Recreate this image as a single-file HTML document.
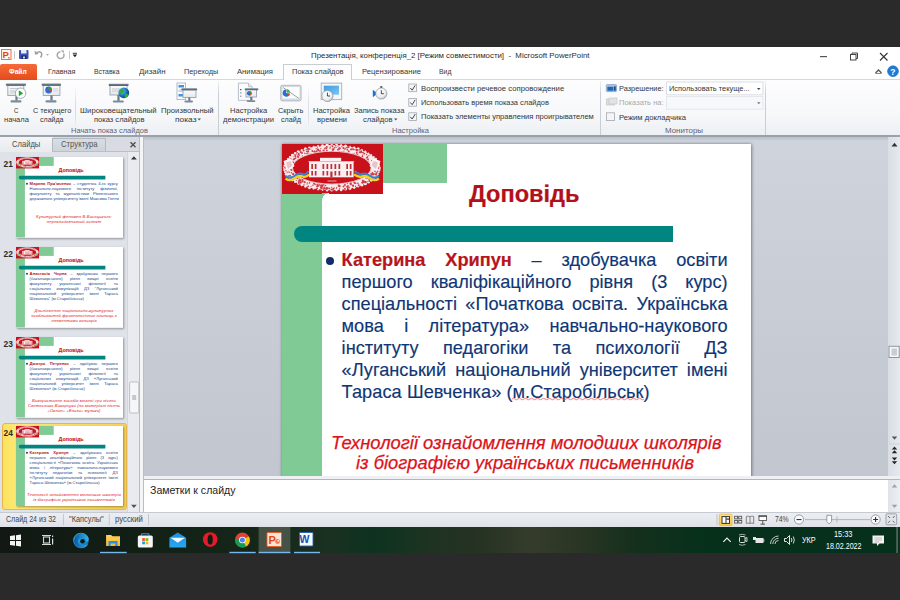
<!DOCTYPE html>
<html><head><meta charset="utf-8">
<style>
*{margin:0;padding:0;box-sizing:border-box}
html,body{width:900px;height:600px;overflow:hidden;background:#2a2a2a;font-family:"Liberation Sans",sans-serif}
.a{position:absolute}
.tx{position:absolute;white-space:nowrap;line-height:1;transform-origin:0 0}
svg{position:absolute;overflow:visible}
.jl{position:absolute;left:0;width:386px;white-space:nowrap;text-align:justify;text-align-last:justify;line-height:1}
.jl.last{text-align-last:left;text-align:left}
</style></head><body>
<!-- title + tabs -->
<div class="a" style="left:0;top:47px;width:900px;height:32px;background:#fff"></div>
<div class="a" style="left:0;top:79px;width:900px;height:1px;background:#d3d8de"></div>
<!-- active tab -->
<div class="a" style="left:283px;top:64px;width:69px;height:16px;background:#fdfdfe;border:1px solid #c9ced5;border-bottom:none"></div>
<!-- file button -->
<div class="a" style="left:0;top:64px;width:37px;height:15.5px;background:linear-gradient(#f66a3a,#e54b1c);border-radius:2px 2px 0 0"></div>
<!-- ribbon -->
<div class="a" style="left:0;top:80px;width:900px;height:56px;background:linear-gradient(#fdfdfe 0%,#f7f8fa 60%,#eceff3 100%)"></div>
<div class="a" style="left:0;top:135px;width:900px;height:2px;background:#9aa1aa"></div>
<!-- group separators -->
<div class="a" style="left:218px;top:81px;width:1px;height:54px;background:linear-gradient(#eef0f3,#c9ced5 25%,#c9ced5 100%)"></div>
<div class="a" style="left:600px;top:81px;width:1px;height:54px;background:linear-gradient(#eef0f3,#c9ced5 25%,#c9ced5 100%)"></div>
<div class="a" style="left:765px;top:81px;width:1px;height:54px;background:linear-gradient(#eef0f3,#c9ced5 25%,#c9ced5 100%)"></div>
<div class="a" style="left:75px;top:88px;width:1px;height:40px;background:linear-gradient(#f5f6f8,#d9dde2 40%,#d9dde2 70%,#f1f3f6)"></div>
<div class="a" style="left:308px;top:88px;width:1px;height:40px;background:linear-gradient(#f5f6f8,#dde1e6 40%,#dde1e6 70%,#f1f3f6)"></div>

<!-- main area -->
<div class="a" style="left:140px;top:137px;width:760px;height:339px;background:linear-gradient(#cfd4dc,#c2c7cf)"></div>
<!-- left panel -->
<div class="a" style="left:0;top:137px;width:140px;height:375px;background:#dfe3e9"></div>
<div class="a" style="left:52px;top:137px;width:88px;height:15px;background:#d8dce2"></div>
<div class="a" style="left:0;top:137px;width:52.5px;height:15px;background:linear-gradient(#f3f4f6,#e8ebef)"></div>
<div class="a" style="left:52px;top:137.5px;width:54px;height:14.5px;background:linear-gradient(#d9dde3,#cdd2d9);border:1px solid #b3b9c1;border-bottom:none"></div>
<div class="a" style="left:52px;top:151px;width:88px;height:1px;background:#b9bfc7"></div>
<div class="a" style="left:127px;top:152px;width:12px;height:360px;background:#e8ebef;border-left:1px solid #d3d7dd"></div>
<div class="a" style="left:139px;top:137px;width:1px;height:375px;background:#b6bcc4"></div>
<div class="a" style="left:140px;top:137px;width:3px;height:375px;background:#f3f5f7"></div>
<div class="a" style="left:143px;top:137px;width:1px;height:375px;background:#b9bec6"></div>
<div class="a" style="left:2px;top:422.5px;width:125px;height:87.5px;border:1px solid #e8b646;border-radius:3px;background:linear-gradient(90deg,#fde25e,#fde878 12%,#f9d254 100%)"></div>
<div class="a" style="left:16px;top:157.0px;width:107.2px;height:80.5px;box-shadow:1px 1px 2px rgba(0,0,0,.35);overflow:hidden">
<div class="a" style="left:0;top:0;width:469px;height:352px;transform:scale(0.2286);transform-origin:0 0">
<div class="a" style="left:0;top:0;width:469px;height:352px;background:#fff">
<div class="a" style="left:0;top:0;width:39px;height:352px;background:#80ca95"></div>
<div class="a" style="left:101px;top:0;width:64px;height:39px;background:#80ca95"></div>
<svg style="left:0;top:0" width="101" height="50" viewBox="0 0 101 50">
    <rect x="0" y="0" width="101" height="50" fill="#c8111b"/>
    <g fill="#f6eaec"><circle cx="97.3" cy="23.7" r="1.51"/><circle cx="97.1" cy="25.9" r="1.44"/><circle cx="96.4" cy="28.1" r="1.34"/><circle cx="95.3" cy="30.3" r="1.34"/><circle cx="93.7" cy="32.3" r="1.15"/><circle cx="91.7" cy="34.4" r="1.10"/><circle cx="89.3" cy="36.3" r="1.46"/><circle cx="86.5" cy="38.0" r="1.51"/><circle cx="83.4" cy="39.7" r="1.56"/><circle cx="79.9" cy="41.2" r="1.38"/><circle cx="76.2" cy="42.5" r="1.11"/><circle cx="72.2" cy="43.6" r="1.43"/><circle cx="68.0" cy="44.6" r="1.42"/><circle cx="63.6" cy="45.3" r="1.26"/><circle cx="59.1" cy="45.9" r="1.34"/><circle cx="54.5" cy="46.2" r="1.15"/><circle cx="49.8" cy="46.3" r="1.29"/><circle cx="45.1" cy="46.2" r="1.18"/><circle cx="40.5" cy="45.9" r="0.94"/><circle cx="36.0" cy="45.3" r="1.14"/><circle cx="31.6" cy="44.6" r="1.13"/><circle cx="27.4" cy="43.6" r="1.59"/><circle cx="23.4" cy="42.5" r="1.24"/><circle cx="19.7" cy="41.2" r="1.16"/><circle cx="16.2" cy="39.7" r="1.07"/><circle cx="13.1" cy="38.0" r="1.06"/><circle cx="10.3" cy="36.3" r="1.14"/><circle cx="7.9" cy="34.4" r="0.99"/><circle cx="5.9" cy="32.3" r="0.91"/><circle cx="4.3" cy="30.3" r="1.51"/><circle cx="3.2" cy="28.1" r="1.22"/><circle cx="2.5" cy="25.9" r="1.21"/><circle cx="2.3" cy="23.7" r="1.30"/><circle cx="2.5" cy="21.5" r="1.11"/><circle cx="3.2" cy="19.3" r="1.02"/><circle cx="4.3" cy="17.1" r="0.95"/><circle cx="5.9" cy="15.1" r="1.11"/><circle cx="7.9" cy="13.0" r="1.12"/><circle cx="10.3" cy="11.1" r="1.41"/><circle cx="13.1" cy="9.4" r="1.29"/><circle cx="16.2" cy="7.7" r="1.56"/><circle cx="19.7" cy="6.2" r="1.14"/><circle cx="23.4" cy="4.9" r="1.54"/><circle cx="27.4" cy="3.8" r="1.31"/><circle cx="31.6" cy="2.8" r="0.96"/><circle cx="36.0" cy="2.1" r="1.03"/><circle cx="40.5" cy="1.5" r="1.31"/><circle cx="45.1" cy="1.2" r="1.59"/><circle cx="49.8" cy="1.1" r="1.15"/><circle cx="54.5" cy="1.2" r="1.44"/><circle cx="59.1" cy="1.5" r="1.20"/><circle cx="63.6" cy="2.1" r="1.51"/><circle cx="68.0" cy="2.8" r="0.95"/><circle cx="72.2" cy="3.8" r="1.24"/><circle cx="76.2" cy="4.9" r="1.53"/><circle cx="79.9" cy="6.2" r="1.09"/><circle cx="83.4" cy="7.7" r="1.08"/><circle cx="86.5" cy="9.4" r="0.92"/><circle cx="89.3" cy="11.1" r="1.02"/><circle cx="91.7" cy="13.0" r="1.09"/><circle cx="93.7" cy="15.1" r="1.39"/><circle cx="95.3" cy="17.1" r="1.05"/><circle cx="96.4" cy="19.3" r="1.18"/><circle cx="97.1" cy="21.5" r="1.04"/></g>
    <path fill-rule="evenodd" fill="#f6eaec" d="M2.3 23.7 A47.5 22.6 0 1 0 97.3 23.7 A47.5 22.6 0 1 0 2.3 23.7 Z M10.3 23.7 A39.5 16.6 0 1 0 89.3 23.7 A39.5 16.6 0 1 0 10.3 23.7 Z"/>
    <g fill="#cf3d48"><circle cx="32.4" cy="7.5" r="0.89"/><circle cx="8.0" cy="25.4" r="0.72"/><circle cx="6.6" cy="24.1" r="0.52"/><circle cx="43.1" cy="3.7" r="0.55"/><circle cx="13.0" cy="10.9" r="0.88"/><circle cx="92.9" cy="27.3" r="0.74"/><circle cx="84.3" cy="14.0" r="0.59"/><circle cx="12.4" cy="14.8" r="0.99"/><circle cx="54.1" cy="3.4" r="0.54"/><circle cx="85.9" cy="34.4" r="0.67"/><circle cx="85.9" cy="15.1" r="0.92"/><circle cx="92.6" cy="22.5" r="0.90"/><circle cx="3.2" cy="22.0" r="0.60"/><circle cx="75.5" cy="6.5" r="0.65"/><circle cx="38.9" cy="41.0" r="0.55"/><circle cx="84.8" cy="13.4" r="0.75"/><circle cx="35.8" cy="41.6" r="1.07"/><circle cx="15.6" cy="8.7" r="0.64"/><circle cx="66.6" cy="3.0" r="1.04"/><circle cx="76.7" cy="41.2" r="0.98"/><circle cx="11.0" cy="30.0" r="0.54"/><circle cx="15.4" cy="12.2" r="0.71"/><circle cx="36.3" cy="6.2" r="1.01"/><circle cx="47.9" cy="4.5" r="0.56"/><circle cx="81.4" cy="8.0" r="0.51"/><circle cx="93.2" cy="25.1" r="0.59"/><circle cx="53.7" cy="1.8" r="0.82"/><circle cx="22.6" cy="38.2" r="1.09"/><circle cx="83.7" cy="38.0" r="0.99"/><circle cx="44.4" cy="44.1" r="1.09"/><circle cx="93.6" cy="17.5" r="0.63"/><circle cx="23.0" cy="9.6" r="0.62"/><circle cx="61.5" cy="42.4" r="1.00"/><circle cx="65.1" cy="42.8" r="0.97"/><circle cx="18.3" cy="37.2" r="0.70"/><circle cx="79.2" cy="7.3" r="1.00"/><circle cx="52.1" cy="43.9" r="0.76"/><circle cx="41.6" cy="6.6" r="1.05"/><circle cx="57.6" cy="42.5" r="0.75"/><circle cx="78.5" cy="8.5" r="0.78"/><circle cx="47.4" cy="44.3" r="0.92"/><circle cx="43.9" cy="3.9" r="0.64"/><circle cx="8.1" cy="31.6" r="0.97"/><circle cx="93.4" cy="19.0" r="0.79"/><circle cx="11.2" cy="12.8" r="0.52"/><circle cx="26.1" cy="7.4" r="1.05"/><circle cx="54.6" cy="43.6" r="0.66"/><circle cx="24.1" cy="5.6" r="0.60"/><circle cx="25.8" cy="8.1" r="0.55"/><circle cx="26.6" cy="4.7" r="0.74"/><circle cx="70.5" cy="41.4" r="0.73"/><circle cx="15.5" cy="34.2" r="0.89"/><circle cx="72.2" cy="38.3" r="0.58"/><circle cx="82.0" cy="37.9" r="1.00"/><circle cx="57.7" cy="42.0" r="0.91"/><circle cx="36.0" cy="5.4" r="1.00"/><circle cx="65.0" cy="3.6" r="0.94"/><circle cx="95.6" cy="23.5" r="0.73"/><circle cx="63.3" cy="4.1" r="0.59"/><circle cx="94.9" cy="21.4" r="0.66"/><circle cx="87.0" cy="33.2" r="0.64"/><circle cx="30.3" cy="7.0" r="0.71"/><circle cx="31.7" cy="39.6" r="0.50"/><circle cx="73.8" cy="39.5" r="0.57"/><circle cx="90.9" cy="33.7" r="1.04"/><circle cx="16.7" cy="10.2" r="1.04"/><circle cx="34.2" cy="4.7" r="0.64"/><circle cx="87.1" cy="35.4" r="0.75"/><circle cx="84.7" cy="10.5" r="0.66"/><circle cx="44.2" cy="44.9" r="1.01"/><circle cx="39.0" cy="43.6" r="1.00"/><circle cx="25.1" cy="5.6" r="0.59"/><circle cx="13.4" cy="12.2" r="0.88"/><circle cx="68.8" cy="5.7" r="0.54"/><circle cx="94.0" cy="30.5" r="1.03"/><circle cx="3.1" cy="23.7" r="0.90"/><circle cx="65.7" cy="43.5" r="0.64"/><circle cx="20.2" cy="37.6" r="0.94"/><circle cx="80.5" cy="11.2" r="0.63"/><circle cx="93.3" cy="23.6" r="0.61"/><circle cx="65.5" cy="44.6" r="0.59"/><circle cx="39.2" cy="42.3" r="1.03"/><circle cx="91.4" cy="15.8" r="0.61"/><circle cx="80.7" cy="38.7" r="0.76"/><circle cx="5.8" cy="22.5" r="0.72"/><circle cx="36.3" cy="42.2" r="0.52"/><circle cx="73.5" cy="42.3" r="0.70"/><circle cx="62.5" cy="44.4" r="0.51"/><circle cx="80.8" cy="36.4" r="0.86"/><circle cx="20.3" cy="12.0" r="0.65"/><circle cx="95.4" cy="27.6" r="1.06"/><circle cx="37.1" cy="40.8" r="0.77"/><circle cx="14.7" cy="10.0" r="0.65"/><circle cx="20.7" cy="37.5" r="0.83"/><circle cx="63.0" cy="4.7" r="0.60"/><circle cx="41.4" cy="40.7" r="1.10"/><circle cx="40.4" cy="41.6" r="0.78"/><circle cx="95.6" cy="22.9" r="0.53"/><circle cx="90.8" cy="18.5" r="1.04"/><circle cx="16.5" cy="37.0" r="0.63"/><circle cx="81.4" cy="9.0" r="0.63"/><circle cx="38.2" cy="6.2" r="0.65"/><circle cx="71.3" cy="42.2" r="0.52"/><circle cx="42.8" cy="4.8" r="0.77"/><circle cx="50.5" cy="2.4" r="0.88"/><circle cx="6.3" cy="23.9" r="0.73"/><circle cx="72.0" cy="38.4" r="0.62"/><circle cx="96.2" cy="23.4" r="1.07"/><circle cx="7.4" cy="16.8" r="0.95"/><circle cx="27.7" cy="38.4" r="0.59"/><circle cx="49.7" cy="43.3" r="0.62"/><circle cx="18.7" cy="8.0" r="1.06"/><circle cx="66.9" cy="42.1" r="0.60"/><circle cx="77.1" cy="5.9" r="0.82"/><circle cx="57.3" cy="41.5" r="0.56"/><circle cx="18.1" cy="35.1" r="0.53"/><circle cx="80.5" cy="12.3" r="0.88"/><circle cx="35.4" cy="5.4" r="0.71"/><circle cx="24.6" cy="7.4" r="0.56"/><circle cx="62.9" cy="41.0" r="0.97"/><circle cx="25.1" cy="42.5" r="0.53"/><circle cx="54.4" cy="44.3" r="0.59"/><circle cx="79.9" cy="8.6" r="0.69"/><circle cx="87.3" cy="36.9" r="0.93"/><circle cx="68.4" cy="39.8" r="0.93"/><circle cx="22.0" cy="41.4" r="0.51"/><circle cx="86.4" cy="15.8" r="0.64"/><circle cx="89.0" cy="29.8" r="0.92"/><circle cx="68.7" cy="40.4" r="0.76"/><circle cx="61.4" cy="4.1" r="1.05"/><circle cx="34.5" cy="7.1" r="0.52"/><circle cx="80.3" cy="38.6" r="1.03"/><circle cx="83.2" cy="38.3" r="0.88"/><circle cx="28.9" cy="5.1" r="0.56"/><circle cx="74.5" cy="10.0" r="0.69"/><circle cx="22.0" cy="40.6" r="0.55"/><circle cx="80.5" cy="8.4" r="0.50"/><circle cx="20.6" cy="35.9" r="1.09"/><circle cx="11.7" cy="30.1" r="0.55"/><circle cx="39.3" cy="41.9" r="0.55"/><circle cx="37.8" cy="41.6" r="0.64"/><circle cx="32.7" cy="7.7" r="1.01"/><circle cx="86.9" cy="11.6" r="0.61"/><circle cx="16.1" cy="12.0" r="0.70"/><circle cx="10.9" cy="18.4" r="1.09"/><circle cx="62.9" cy="5.5" r="0.62"/><circle cx="71.1" cy="41.4" r="0.96"/><circle cx="68.9" cy="40.1" r="0.91"/><circle cx="66.5" cy="43.8" r="0.61"/><circle cx="51.4" cy="5.2" r="0.84"/><circle cx="40.8" cy="44.6" r="0.63"/><circle cx="75.0" cy="6.2" r="1.09"/><circle cx="35.5" cy="3.1" r="0.66"/><circle cx="21.6" cy="6.5" r="0.97"/><circle cx="80.4" cy="38.5" r="0.78"/><circle cx="35.4" cy="40.1" r="0.66"/><circle cx="34.6" cy="7.6" r="1.04"/><circle cx="77.8" cy="8.3" r="1.03"/><circle cx="65.8" cy="42.1" r="0.97"/><circle cx="82.4" cy="9.7" r="0.92"/><circle cx="43.5" cy="41.5" r="0.83"/><circle cx="6.7" cy="22.2" r="0.59"/><circle cx="65.5" cy="39.6" r="0.72"/><circle cx="41.6" cy="45.2" r="0.55"/><circle cx="67.2" cy="43.8" r="0.70"/><circle cx="96.2" cy="24.2" r="0.79"/><circle cx="33.8" cy="40.6" r="0.72"/><circle cx="75.7" cy="10.3" r="0.76"/><circle cx="50.1" cy="45.8" r="0.89"/><circle cx="71.1" cy="41.7" r="0.83"/><circle cx="90.4" cy="28.8" r="0.89"/><circle cx="89.7" cy="31.0" r="0.72"/><circle cx="80.8" cy="37.1" r="0.84"/><circle cx="56.0" cy="2.3" r="0.57"/><circle cx="90.1" cy="21.3" r="0.51"/><circle cx="10.9" cy="30.5" r="0.63"/><circle cx="72.2" cy="9.2" r="0.53"/><circle cx="84.0" cy="34.4" r="0.55"/><circle cx="45.7" cy="43.9" r="0.65"/><circle cx="8.7" cy="15.0" r="0.94"/><circle cx="48.2" cy="3.3" r="0.72"/><circle cx="66.7" cy="7.2" r="0.98"/><circle cx="69.2" cy="39.0" r="0.70"/><circle cx="81.8" cy="38.2" r="1.02"/><circle cx="83.6" cy="38.0" r="0.91"/><circle cx="89.6" cy="16.6" r="0.55"/><circle cx="57.2" cy="42.2" r="1.03"/><circle cx="19.7" cy="8.9" r="0.92"/><circle cx="11.3" cy="29.9" r="0.97"/><circle cx="42.3" cy="44.5" r="0.96"/><circle cx="20.5" cy="8.9" r="0.55"/><circle cx="5.9" cy="26.4" r="1.02"/><circle cx="45.5" cy="44.5" r="1.05"/><circle cx="7.2" cy="28.3" r="0.74"/><circle cx="63.1" cy="45.0" r="0.90"/><circle cx="35.1" cy="42.5" r="1.04"/><circle cx="11.2" cy="15.6" r="0.65"/><circle cx="17.4" cy="11.6" r="0.59"/><circle cx="61.9" cy="7.1" r="0.63"/><circle cx="85.5" cy="12.9" r="0.75"/><circle cx="16.1" cy="13.1" r="1.00"/><circle cx="87.8" cy="31.6" r="0.63"/><circle cx="26.0" cy="9.9" r="0.72"/><circle cx="29.1" cy="42.2" r="0.53"/><circle cx="18.5" cy="36.3" r="0.93"/><circle cx="9.5" cy="28.8" r="0.80"/><circle cx="85.6" cy="12.9" r="0.61"/><circle cx="51.0" cy="6.1" r="0.93"/><circle cx="93.5" cy="23.5" r="0.81"/><circle cx="22.7" cy="9.0" r="0.56"/><circle cx="25.3" cy="38.5" r="0.52"/><circle cx="10.4" cy="33.0" r="0.62"/><circle cx="69.2" cy="5.3" r="1.02"/><circle cx="16.9" cy="38.9" r="1.06"/><circle cx="39.4" cy="44.3" r="0.97"/><circle cx="51.2" cy="45.0" r="1.06"/><circle cx="52.5" cy="3.7" r="0.76"/><circle cx="50.0" cy="1.5" r="0.58"/><circle cx="91.9" cy="29.9" r="0.99"/><circle cx="90.7" cy="29.4" r="0.65"/><circle cx="93.7" cy="24.4" r="0.66"/><circle cx="13.7" cy="14.2" r="0.74"/><circle cx="9.5" cy="25.9" r="1.00"/><circle cx="35.2" cy="40.6" r="0.64"/><circle cx="7.0" cy="18.5" r="0.76"/><circle cx="72.3" cy="5.6" r="0.64"/><circle cx="49.3" cy="45.3" r="0.84"/><circle cx="30.5" cy="7.2" r="0.85"/><circle cx="57.4" cy="4.6" r="1.05"/><circle cx="32.4" cy="39.7" r="1.00"/><circle cx="42.4" cy="42.8" r="0.51"/><circle cx="5.6" cy="26.8" r="0.80"/><circle cx="35.1" cy="44.6" r="0.91"/><circle cx="51.9" cy="5.1" r="0.72"/><circle cx="56.7" cy="41.4" r="1.08"/><circle cx="80.1" cy="8.4" r="0.69"/><circle cx="50.7" cy="5.6" r="1.04"/><circle cx="5.1" cy="19.6" r="0.97"/><circle cx="74.7" cy="5.5" r="0.56"/><circle cx="26.9" cy="5.1" r="1.04"/><circle cx="57.5" cy="45.1" r="0.76"/><circle cx="94.1" cy="23.5" r="1.07"/><circle cx="31.0" cy="41.2" r="0.79"/><circle cx="24.8" cy="9.4" r="0.67"/><circle cx="16.1" cy="33.3" r="0.56"/><circle cx="27.2" cy="39.3" r="0.58"/><circle cx="79.1" cy="7.9" r="0.71"/><circle cx="93.2" cy="24.0" r="0.64"/><circle cx="44.9" cy="6.6" r="0.92"/><circle cx="26.3" cy="42.3" r="0.85"/><circle cx="38.8" cy="4.5" r="0.61"/><circle cx="65.3" cy="5.6" r="0.84"/><circle cx="13.2" cy="33.8" r="0.67"/><circle cx="40.1" cy="42.8" r="0.96"/><circle cx="13.8" cy="13.4" r="0.52"/><circle cx="25.1" cy="39.9" r="0.71"/><circle cx="16.7" cy="9.7" r="0.68"/><circle cx="37.9" cy="2.3" r="0.69"/><circle cx="81.9" cy="36.6" r="0.67"/><circle cx="59.9" cy="2.7" r="0.65"/><circle cx="73.5" cy="39.0" r="0.67"/><circle cx="42.1" cy="43.8" r="0.91"/><circle cx="72.6" cy="39.1" r="0.88"/><circle cx="44.9" cy="3.0" r="0.92"/><circle cx="6.8" cy="17.1" r="0.75"/><circle cx="14.2" cy="33.4" r="0.90"/><circle cx="91.8" cy="16.8" r="0.68"/><circle cx="74.8" cy="8.4" r="0.90"/><circle cx="75.3" cy="39.1" r="0.57"/><circle cx="12.0" cy="15.6" r="0.78"/><circle cx="9.1" cy="33.8" r="1.09"/><circle cx="55.7" cy="5.6" r="0.79"/><circle cx="90.2" cy="30.5" r="0.88"/><circle cx="91.7" cy="30.8" r="0.65"/><circle cx="24.9" cy="6.9" r="0.52"/><circle cx="76.1" cy="39.5" r="0.68"/><circle cx="17.3" cy="37.0" r="1.00"/><circle cx="18.9" cy="38.9" r="0.69"/><circle cx="57.4" cy="4.2" r="0.91"/><circle cx="4.9" cy="20.9" r="0.61"/><circle cx="94.3" cy="29.3" r="0.99"/><circle cx="6.8" cy="32.0" r="0.87"/><circle cx="93.4" cy="22.9" r="0.89"/><circle cx="44.4" cy="4.5" r="0.90"/><circle cx="25.6" cy="4.9" r="0.82"/><circle cx="56.6" cy="5.8" r="0.81"/><circle cx="58.1" cy="4.2" r="0.74"/><circle cx="8.1" cy="20.9" r="1.02"/><circle cx="74.4" cy="5.8" r="1.09"/><circle cx="71.0" cy="5.2" r="1.00"/><circle cx="94.1" cy="26.7" r="0.96"/><circle cx="14.3" cy="36.6" r="0.53"/><circle cx="17.3" cy="35.2" r="0.70"/><circle cx="5.2" cy="28.6" r="0.56"/><circle cx="37.9" cy="7.2" r="1.03"/><circle cx="85.7" cy="37.7" r="0.52"/><circle cx="18.7" cy="38.6" r="0.91"/><circle cx="39.2" cy="41.1" r="0.87"/><circle cx="8.4" cy="15.8" r="0.63"/><circle cx="4.3" cy="26.6" r="0.96"/></g>
    <ellipse cx="49.8" cy="23.7" rx="39.3" ry="16.4" fill="none" stroke="#f6eaec" stroke-width="0.8"/>
    <path d="M1.5 17 L9 14.5 L12.5 22 L5 28 Z M98.5 17 L91 14.5 L87.5 22 L95 28 Z" fill="#fbf3f4"/>
    <path d="M4 18.5 L8.5 17 L10.5 21.5 L6 25 Z M96 18.5 L91.5 17 L89.5 21.5 L94 25 Z" fill="#e9c4c8"/>
    <rect x="27" y="17.3" width="44.6" height="16" fill="#fbeff1"/>
    <rect x="38" y="13.8" width="21.2" height="4" fill="#fbeff1"/>
    <rect x="26.5" y="17" width="45.6" height="1" fill="#eab4b9"/>
    <g fill="#b8323d">
      <rect x="29.3" y="20" width="1.7" height="5"/><rect x="32.8" y="20" width="1.7" height="5"/>
      <rect x="40.5" y="20" width="1.7" height="5"/><rect x="44.5" y="20" width="1.7" height="5"/><rect x="48.5" y="20" width="1.7" height="5"/><rect x="52.5" y="20" width="1.7" height="5"/><rect x="56.5" y="20" width="1.7" height="5"/>
      <rect x="64.3" y="20" width="1.7" height="5"/><rect x="67.8" y="20" width="1.7" height="5"/>
      <rect x="29.3" y="27" width="1.7" height="4.5"/><rect x="32.8" y="27" width="1.7" height="4.5"/>
      <rect x="40.5" y="27" width="1.7" height="4.5"/><rect x="44.5" y="27" width="1.7" height="4.5"/><rect x="48.3" y="27.5" width="2.2" height="5.8"/><rect x="52.5" y="27" width="1.7" height="4.5"/><rect x="56.5" y="27" width="1.7" height="4.5"/>
      <rect x="64.3" y="27" width="1.7" height="4.5"/><rect x="67.8" y="27" width="1.7" height="4.5"/>
    </g>
    <path d="M3.5 34.5 Q8 38 13 34 Q17 31 21 32.5 Q24 33.5 27 30.5" fill="none" stroke="#f2d21a" stroke-width="2.4"/>
    <path d="M3.5 32 Q8 35.5 13 31.5 Q17 28.5 21 30 Q24 31 26.5 27" fill="none" stroke="#2f86d6" stroke-width="2"/>
    <path d="M97 34.5 Q92.5 38 87.5 34 Q83.5 31 79.5 32.5 Q76.5 33.5 72 30.5" fill="none" stroke="#f2d21a" stroke-width="2.4"/>
    <path d="M97 32 Q92.5 35.5 87.5 31.5 Q83.5 28.5 79.5 30 Q76.5 31 72.5 27" fill="none" stroke="#2f86d6" stroke-width="2"/>
    <rect x="45.5" y="36.5" width="9" height="1" fill="#e8a5aa"/>
  </svg>
<div class="a" style="left:12px;top:82px;width:379px;height:16px;background:#008580;border-radius:8px 0 0 8px"></div>
<div class="a" style="left:44px;top:113px;width:8px;height:8px;border-radius:50%;background:#0f2e66"></div>
<div class="tx" style="left:186px;top:45px;font-size:23.4px;font-weight:bold;color:#c8121b;-webkit-text-stroke:0.3px #c8121b">Доповідь</div>
<div class="jl" style="left:59.6px;top:106.1px;font-size:18.2px;color:#0f3675;color:#1d4a8a"><b style="color:#b5151b">Марина Пря'мченко</b> – студентка 4-го курсу</div>
<div class="jl" style="left:59.6px;top:128.0px;font-size:18.2px;color:#0f3675;color:#1d4a8a">Навчально-наукового інституту фізичної,</div>
<div class="jl" style="left:59.6px;top:149.9px;font-size:18.2px;color:#0f3675;color:#1d4a8a">факультету та журналістики Рівненського</div>
<div class="jl last" style="left:59.6px;top:171.8px;font-size:18.2px;color:#0f3675;color:#1d4a8a">державного університету імені Максима Гонти</div>
<div class="tx" style="left:39px;width:430px;text-align:center;top:253.0px;font-size:18.2px;font-style:italic;color:#e0141c;letter-spacing:0.6px">Культурний феномен В.Висоцького:</div>
<div class="tx" style="left:39px;width:430px;text-align:center;top:275.0px;font-size:18.2px;font-style:italic;color:#e0141c;letter-spacing:0.6px">перекладознавчий аспект</div>
</div>
</div></div>
<div class="tx" style="left:3.6px;top:159.7px;font-size:8.4px;font-weight:bold;color:#2b2b2b">21</div>
<div class="a" style="left:16px;top:247.2px;width:107.2px;height:80.5px;box-shadow:1px 1px 2px rgba(0,0,0,.35);overflow:hidden">
<div class="a" style="left:0;top:0;width:469px;height:352px;transform:scale(0.2286);transform-origin:0 0">
<div class="a" style="left:0;top:0;width:469px;height:352px;background:#fff">
<div class="a" style="left:0;top:0;width:39px;height:352px;background:#80ca95"></div>
<div class="a" style="left:101px;top:0;width:64px;height:39px;background:#80ca95"></div>
<svg style="left:0;top:0" width="101" height="50" viewBox="0 0 101 50">
    <rect x="0" y="0" width="101" height="50" fill="#c8111b"/>
    <g fill="#f6eaec"><circle cx="97.3" cy="23.7" r="1.51"/><circle cx="97.1" cy="25.9" r="1.44"/><circle cx="96.4" cy="28.1" r="1.34"/><circle cx="95.3" cy="30.3" r="1.34"/><circle cx="93.7" cy="32.3" r="1.15"/><circle cx="91.7" cy="34.4" r="1.10"/><circle cx="89.3" cy="36.3" r="1.46"/><circle cx="86.5" cy="38.0" r="1.51"/><circle cx="83.4" cy="39.7" r="1.56"/><circle cx="79.9" cy="41.2" r="1.38"/><circle cx="76.2" cy="42.5" r="1.11"/><circle cx="72.2" cy="43.6" r="1.43"/><circle cx="68.0" cy="44.6" r="1.42"/><circle cx="63.6" cy="45.3" r="1.26"/><circle cx="59.1" cy="45.9" r="1.34"/><circle cx="54.5" cy="46.2" r="1.15"/><circle cx="49.8" cy="46.3" r="1.29"/><circle cx="45.1" cy="46.2" r="1.18"/><circle cx="40.5" cy="45.9" r="0.94"/><circle cx="36.0" cy="45.3" r="1.14"/><circle cx="31.6" cy="44.6" r="1.13"/><circle cx="27.4" cy="43.6" r="1.59"/><circle cx="23.4" cy="42.5" r="1.24"/><circle cx="19.7" cy="41.2" r="1.16"/><circle cx="16.2" cy="39.7" r="1.07"/><circle cx="13.1" cy="38.0" r="1.06"/><circle cx="10.3" cy="36.3" r="1.14"/><circle cx="7.9" cy="34.4" r="0.99"/><circle cx="5.9" cy="32.3" r="0.91"/><circle cx="4.3" cy="30.3" r="1.51"/><circle cx="3.2" cy="28.1" r="1.22"/><circle cx="2.5" cy="25.9" r="1.21"/><circle cx="2.3" cy="23.7" r="1.30"/><circle cx="2.5" cy="21.5" r="1.11"/><circle cx="3.2" cy="19.3" r="1.02"/><circle cx="4.3" cy="17.1" r="0.95"/><circle cx="5.9" cy="15.1" r="1.11"/><circle cx="7.9" cy="13.0" r="1.12"/><circle cx="10.3" cy="11.1" r="1.41"/><circle cx="13.1" cy="9.4" r="1.29"/><circle cx="16.2" cy="7.7" r="1.56"/><circle cx="19.7" cy="6.2" r="1.14"/><circle cx="23.4" cy="4.9" r="1.54"/><circle cx="27.4" cy="3.8" r="1.31"/><circle cx="31.6" cy="2.8" r="0.96"/><circle cx="36.0" cy="2.1" r="1.03"/><circle cx="40.5" cy="1.5" r="1.31"/><circle cx="45.1" cy="1.2" r="1.59"/><circle cx="49.8" cy="1.1" r="1.15"/><circle cx="54.5" cy="1.2" r="1.44"/><circle cx="59.1" cy="1.5" r="1.20"/><circle cx="63.6" cy="2.1" r="1.51"/><circle cx="68.0" cy="2.8" r="0.95"/><circle cx="72.2" cy="3.8" r="1.24"/><circle cx="76.2" cy="4.9" r="1.53"/><circle cx="79.9" cy="6.2" r="1.09"/><circle cx="83.4" cy="7.7" r="1.08"/><circle cx="86.5" cy="9.4" r="0.92"/><circle cx="89.3" cy="11.1" r="1.02"/><circle cx="91.7" cy="13.0" r="1.09"/><circle cx="93.7" cy="15.1" r="1.39"/><circle cx="95.3" cy="17.1" r="1.05"/><circle cx="96.4" cy="19.3" r="1.18"/><circle cx="97.1" cy="21.5" r="1.04"/></g>
    <path fill-rule="evenodd" fill="#f6eaec" d="M2.3 23.7 A47.5 22.6 0 1 0 97.3 23.7 A47.5 22.6 0 1 0 2.3 23.7 Z M10.3 23.7 A39.5 16.6 0 1 0 89.3 23.7 A39.5 16.6 0 1 0 10.3 23.7 Z"/>
    <g fill="#cf3d48"><circle cx="32.4" cy="7.5" r="0.89"/><circle cx="8.0" cy="25.4" r="0.72"/><circle cx="6.6" cy="24.1" r="0.52"/><circle cx="43.1" cy="3.7" r="0.55"/><circle cx="13.0" cy="10.9" r="0.88"/><circle cx="92.9" cy="27.3" r="0.74"/><circle cx="84.3" cy="14.0" r="0.59"/><circle cx="12.4" cy="14.8" r="0.99"/><circle cx="54.1" cy="3.4" r="0.54"/><circle cx="85.9" cy="34.4" r="0.67"/><circle cx="85.9" cy="15.1" r="0.92"/><circle cx="92.6" cy="22.5" r="0.90"/><circle cx="3.2" cy="22.0" r="0.60"/><circle cx="75.5" cy="6.5" r="0.65"/><circle cx="38.9" cy="41.0" r="0.55"/><circle cx="84.8" cy="13.4" r="0.75"/><circle cx="35.8" cy="41.6" r="1.07"/><circle cx="15.6" cy="8.7" r="0.64"/><circle cx="66.6" cy="3.0" r="1.04"/><circle cx="76.7" cy="41.2" r="0.98"/><circle cx="11.0" cy="30.0" r="0.54"/><circle cx="15.4" cy="12.2" r="0.71"/><circle cx="36.3" cy="6.2" r="1.01"/><circle cx="47.9" cy="4.5" r="0.56"/><circle cx="81.4" cy="8.0" r="0.51"/><circle cx="93.2" cy="25.1" r="0.59"/><circle cx="53.7" cy="1.8" r="0.82"/><circle cx="22.6" cy="38.2" r="1.09"/><circle cx="83.7" cy="38.0" r="0.99"/><circle cx="44.4" cy="44.1" r="1.09"/><circle cx="93.6" cy="17.5" r="0.63"/><circle cx="23.0" cy="9.6" r="0.62"/><circle cx="61.5" cy="42.4" r="1.00"/><circle cx="65.1" cy="42.8" r="0.97"/><circle cx="18.3" cy="37.2" r="0.70"/><circle cx="79.2" cy="7.3" r="1.00"/><circle cx="52.1" cy="43.9" r="0.76"/><circle cx="41.6" cy="6.6" r="1.05"/><circle cx="57.6" cy="42.5" r="0.75"/><circle cx="78.5" cy="8.5" r="0.78"/><circle cx="47.4" cy="44.3" r="0.92"/><circle cx="43.9" cy="3.9" r="0.64"/><circle cx="8.1" cy="31.6" r="0.97"/><circle cx="93.4" cy="19.0" r="0.79"/><circle cx="11.2" cy="12.8" r="0.52"/><circle cx="26.1" cy="7.4" r="1.05"/><circle cx="54.6" cy="43.6" r="0.66"/><circle cx="24.1" cy="5.6" r="0.60"/><circle cx="25.8" cy="8.1" r="0.55"/><circle cx="26.6" cy="4.7" r="0.74"/><circle cx="70.5" cy="41.4" r="0.73"/><circle cx="15.5" cy="34.2" r="0.89"/><circle cx="72.2" cy="38.3" r="0.58"/><circle cx="82.0" cy="37.9" r="1.00"/><circle cx="57.7" cy="42.0" r="0.91"/><circle cx="36.0" cy="5.4" r="1.00"/><circle cx="65.0" cy="3.6" r="0.94"/><circle cx="95.6" cy="23.5" r="0.73"/><circle cx="63.3" cy="4.1" r="0.59"/><circle cx="94.9" cy="21.4" r="0.66"/><circle cx="87.0" cy="33.2" r="0.64"/><circle cx="30.3" cy="7.0" r="0.71"/><circle cx="31.7" cy="39.6" r="0.50"/><circle cx="73.8" cy="39.5" r="0.57"/><circle cx="90.9" cy="33.7" r="1.04"/><circle cx="16.7" cy="10.2" r="1.04"/><circle cx="34.2" cy="4.7" r="0.64"/><circle cx="87.1" cy="35.4" r="0.75"/><circle cx="84.7" cy="10.5" r="0.66"/><circle cx="44.2" cy="44.9" r="1.01"/><circle cx="39.0" cy="43.6" r="1.00"/><circle cx="25.1" cy="5.6" r="0.59"/><circle cx="13.4" cy="12.2" r="0.88"/><circle cx="68.8" cy="5.7" r="0.54"/><circle cx="94.0" cy="30.5" r="1.03"/><circle cx="3.1" cy="23.7" r="0.90"/><circle cx="65.7" cy="43.5" r="0.64"/><circle cx="20.2" cy="37.6" r="0.94"/><circle cx="80.5" cy="11.2" r="0.63"/><circle cx="93.3" cy="23.6" r="0.61"/><circle cx="65.5" cy="44.6" r="0.59"/><circle cx="39.2" cy="42.3" r="1.03"/><circle cx="91.4" cy="15.8" r="0.61"/><circle cx="80.7" cy="38.7" r="0.76"/><circle cx="5.8" cy="22.5" r="0.72"/><circle cx="36.3" cy="42.2" r="0.52"/><circle cx="73.5" cy="42.3" r="0.70"/><circle cx="62.5" cy="44.4" r="0.51"/><circle cx="80.8" cy="36.4" r="0.86"/><circle cx="20.3" cy="12.0" r="0.65"/><circle cx="95.4" cy="27.6" r="1.06"/><circle cx="37.1" cy="40.8" r="0.77"/><circle cx="14.7" cy="10.0" r="0.65"/><circle cx="20.7" cy="37.5" r="0.83"/><circle cx="63.0" cy="4.7" r="0.60"/><circle cx="41.4" cy="40.7" r="1.10"/><circle cx="40.4" cy="41.6" r="0.78"/><circle cx="95.6" cy="22.9" r="0.53"/><circle cx="90.8" cy="18.5" r="1.04"/><circle cx="16.5" cy="37.0" r="0.63"/><circle cx="81.4" cy="9.0" r="0.63"/><circle cx="38.2" cy="6.2" r="0.65"/><circle cx="71.3" cy="42.2" r="0.52"/><circle cx="42.8" cy="4.8" r="0.77"/><circle cx="50.5" cy="2.4" r="0.88"/><circle cx="6.3" cy="23.9" r="0.73"/><circle cx="72.0" cy="38.4" r="0.62"/><circle cx="96.2" cy="23.4" r="1.07"/><circle cx="7.4" cy="16.8" r="0.95"/><circle cx="27.7" cy="38.4" r="0.59"/><circle cx="49.7" cy="43.3" r="0.62"/><circle cx="18.7" cy="8.0" r="1.06"/><circle cx="66.9" cy="42.1" r="0.60"/><circle cx="77.1" cy="5.9" r="0.82"/><circle cx="57.3" cy="41.5" r="0.56"/><circle cx="18.1" cy="35.1" r="0.53"/><circle cx="80.5" cy="12.3" r="0.88"/><circle cx="35.4" cy="5.4" r="0.71"/><circle cx="24.6" cy="7.4" r="0.56"/><circle cx="62.9" cy="41.0" r="0.97"/><circle cx="25.1" cy="42.5" r="0.53"/><circle cx="54.4" cy="44.3" r="0.59"/><circle cx="79.9" cy="8.6" r="0.69"/><circle cx="87.3" cy="36.9" r="0.93"/><circle cx="68.4" cy="39.8" r="0.93"/><circle cx="22.0" cy="41.4" r="0.51"/><circle cx="86.4" cy="15.8" r="0.64"/><circle cx="89.0" cy="29.8" r="0.92"/><circle cx="68.7" cy="40.4" r="0.76"/><circle cx="61.4" cy="4.1" r="1.05"/><circle cx="34.5" cy="7.1" r="0.52"/><circle cx="80.3" cy="38.6" r="1.03"/><circle cx="83.2" cy="38.3" r="0.88"/><circle cx="28.9" cy="5.1" r="0.56"/><circle cx="74.5" cy="10.0" r="0.69"/><circle cx="22.0" cy="40.6" r="0.55"/><circle cx="80.5" cy="8.4" r="0.50"/><circle cx="20.6" cy="35.9" r="1.09"/><circle cx="11.7" cy="30.1" r="0.55"/><circle cx="39.3" cy="41.9" r="0.55"/><circle cx="37.8" cy="41.6" r="0.64"/><circle cx="32.7" cy="7.7" r="1.01"/><circle cx="86.9" cy="11.6" r="0.61"/><circle cx="16.1" cy="12.0" r="0.70"/><circle cx="10.9" cy="18.4" r="1.09"/><circle cx="62.9" cy="5.5" r="0.62"/><circle cx="71.1" cy="41.4" r="0.96"/><circle cx="68.9" cy="40.1" r="0.91"/><circle cx="66.5" cy="43.8" r="0.61"/><circle cx="51.4" cy="5.2" r="0.84"/><circle cx="40.8" cy="44.6" r="0.63"/><circle cx="75.0" cy="6.2" r="1.09"/><circle cx="35.5" cy="3.1" r="0.66"/><circle cx="21.6" cy="6.5" r="0.97"/><circle cx="80.4" cy="38.5" r="0.78"/><circle cx="35.4" cy="40.1" r="0.66"/><circle cx="34.6" cy="7.6" r="1.04"/><circle cx="77.8" cy="8.3" r="1.03"/><circle cx="65.8" cy="42.1" r="0.97"/><circle cx="82.4" cy="9.7" r="0.92"/><circle cx="43.5" cy="41.5" r="0.83"/><circle cx="6.7" cy="22.2" r="0.59"/><circle cx="65.5" cy="39.6" r="0.72"/><circle cx="41.6" cy="45.2" r="0.55"/><circle cx="67.2" cy="43.8" r="0.70"/><circle cx="96.2" cy="24.2" r="0.79"/><circle cx="33.8" cy="40.6" r="0.72"/><circle cx="75.7" cy="10.3" r="0.76"/><circle cx="50.1" cy="45.8" r="0.89"/><circle cx="71.1" cy="41.7" r="0.83"/><circle cx="90.4" cy="28.8" r="0.89"/><circle cx="89.7" cy="31.0" r="0.72"/><circle cx="80.8" cy="37.1" r="0.84"/><circle cx="56.0" cy="2.3" r="0.57"/><circle cx="90.1" cy="21.3" r="0.51"/><circle cx="10.9" cy="30.5" r="0.63"/><circle cx="72.2" cy="9.2" r="0.53"/><circle cx="84.0" cy="34.4" r="0.55"/><circle cx="45.7" cy="43.9" r="0.65"/><circle cx="8.7" cy="15.0" r="0.94"/><circle cx="48.2" cy="3.3" r="0.72"/><circle cx="66.7" cy="7.2" r="0.98"/><circle cx="69.2" cy="39.0" r="0.70"/><circle cx="81.8" cy="38.2" r="1.02"/><circle cx="83.6" cy="38.0" r="0.91"/><circle cx="89.6" cy="16.6" r="0.55"/><circle cx="57.2" cy="42.2" r="1.03"/><circle cx="19.7" cy="8.9" r="0.92"/><circle cx="11.3" cy="29.9" r="0.97"/><circle cx="42.3" cy="44.5" r="0.96"/><circle cx="20.5" cy="8.9" r="0.55"/><circle cx="5.9" cy="26.4" r="1.02"/><circle cx="45.5" cy="44.5" r="1.05"/><circle cx="7.2" cy="28.3" r="0.74"/><circle cx="63.1" cy="45.0" r="0.90"/><circle cx="35.1" cy="42.5" r="1.04"/><circle cx="11.2" cy="15.6" r="0.65"/><circle cx="17.4" cy="11.6" r="0.59"/><circle cx="61.9" cy="7.1" r="0.63"/><circle cx="85.5" cy="12.9" r="0.75"/><circle cx="16.1" cy="13.1" r="1.00"/><circle cx="87.8" cy="31.6" r="0.63"/><circle cx="26.0" cy="9.9" r="0.72"/><circle cx="29.1" cy="42.2" r="0.53"/><circle cx="18.5" cy="36.3" r="0.93"/><circle cx="9.5" cy="28.8" r="0.80"/><circle cx="85.6" cy="12.9" r="0.61"/><circle cx="51.0" cy="6.1" r="0.93"/><circle cx="93.5" cy="23.5" r="0.81"/><circle cx="22.7" cy="9.0" r="0.56"/><circle cx="25.3" cy="38.5" r="0.52"/><circle cx="10.4" cy="33.0" r="0.62"/><circle cx="69.2" cy="5.3" r="1.02"/><circle cx="16.9" cy="38.9" r="1.06"/><circle cx="39.4" cy="44.3" r="0.97"/><circle cx="51.2" cy="45.0" r="1.06"/><circle cx="52.5" cy="3.7" r="0.76"/><circle cx="50.0" cy="1.5" r="0.58"/><circle cx="91.9" cy="29.9" r="0.99"/><circle cx="90.7" cy="29.4" r="0.65"/><circle cx="93.7" cy="24.4" r="0.66"/><circle cx="13.7" cy="14.2" r="0.74"/><circle cx="9.5" cy="25.9" r="1.00"/><circle cx="35.2" cy="40.6" r="0.64"/><circle cx="7.0" cy="18.5" r="0.76"/><circle cx="72.3" cy="5.6" r="0.64"/><circle cx="49.3" cy="45.3" r="0.84"/><circle cx="30.5" cy="7.2" r="0.85"/><circle cx="57.4" cy="4.6" r="1.05"/><circle cx="32.4" cy="39.7" r="1.00"/><circle cx="42.4" cy="42.8" r="0.51"/><circle cx="5.6" cy="26.8" r="0.80"/><circle cx="35.1" cy="44.6" r="0.91"/><circle cx="51.9" cy="5.1" r="0.72"/><circle cx="56.7" cy="41.4" r="1.08"/><circle cx="80.1" cy="8.4" r="0.69"/><circle cx="50.7" cy="5.6" r="1.04"/><circle cx="5.1" cy="19.6" r="0.97"/><circle cx="74.7" cy="5.5" r="0.56"/><circle cx="26.9" cy="5.1" r="1.04"/><circle cx="57.5" cy="45.1" r="0.76"/><circle cx="94.1" cy="23.5" r="1.07"/><circle cx="31.0" cy="41.2" r="0.79"/><circle cx="24.8" cy="9.4" r="0.67"/><circle cx="16.1" cy="33.3" r="0.56"/><circle cx="27.2" cy="39.3" r="0.58"/><circle cx="79.1" cy="7.9" r="0.71"/><circle cx="93.2" cy="24.0" r="0.64"/><circle cx="44.9" cy="6.6" r="0.92"/><circle cx="26.3" cy="42.3" r="0.85"/><circle cx="38.8" cy="4.5" r="0.61"/><circle cx="65.3" cy="5.6" r="0.84"/><circle cx="13.2" cy="33.8" r="0.67"/><circle cx="40.1" cy="42.8" r="0.96"/><circle cx="13.8" cy="13.4" r="0.52"/><circle cx="25.1" cy="39.9" r="0.71"/><circle cx="16.7" cy="9.7" r="0.68"/><circle cx="37.9" cy="2.3" r="0.69"/><circle cx="81.9" cy="36.6" r="0.67"/><circle cx="59.9" cy="2.7" r="0.65"/><circle cx="73.5" cy="39.0" r="0.67"/><circle cx="42.1" cy="43.8" r="0.91"/><circle cx="72.6" cy="39.1" r="0.88"/><circle cx="44.9" cy="3.0" r="0.92"/><circle cx="6.8" cy="17.1" r="0.75"/><circle cx="14.2" cy="33.4" r="0.90"/><circle cx="91.8" cy="16.8" r="0.68"/><circle cx="74.8" cy="8.4" r="0.90"/><circle cx="75.3" cy="39.1" r="0.57"/><circle cx="12.0" cy="15.6" r="0.78"/><circle cx="9.1" cy="33.8" r="1.09"/><circle cx="55.7" cy="5.6" r="0.79"/><circle cx="90.2" cy="30.5" r="0.88"/><circle cx="91.7" cy="30.8" r="0.65"/><circle cx="24.9" cy="6.9" r="0.52"/><circle cx="76.1" cy="39.5" r="0.68"/><circle cx="17.3" cy="37.0" r="1.00"/><circle cx="18.9" cy="38.9" r="0.69"/><circle cx="57.4" cy="4.2" r="0.91"/><circle cx="4.9" cy="20.9" r="0.61"/><circle cx="94.3" cy="29.3" r="0.99"/><circle cx="6.8" cy="32.0" r="0.87"/><circle cx="93.4" cy="22.9" r="0.89"/><circle cx="44.4" cy="4.5" r="0.90"/><circle cx="25.6" cy="4.9" r="0.82"/><circle cx="56.6" cy="5.8" r="0.81"/><circle cx="58.1" cy="4.2" r="0.74"/><circle cx="8.1" cy="20.9" r="1.02"/><circle cx="74.4" cy="5.8" r="1.09"/><circle cx="71.0" cy="5.2" r="1.00"/><circle cx="94.1" cy="26.7" r="0.96"/><circle cx="14.3" cy="36.6" r="0.53"/><circle cx="17.3" cy="35.2" r="0.70"/><circle cx="5.2" cy="28.6" r="0.56"/><circle cx="37.9" cy="7.2" r="1.03"/><circle cx="85.7" cy="37.7" r="0.52"/><circle cx="18.7" cy="38.6" r="0.91"/><circle cx="39.2" cy="41.1" r="0.87"/><circle cx="8.4" cy="15.8" r="0.63"/><circle cx="4.3" cy="26.6" r="0.96"/></g>
    <ellipse cx="49.8" cy="23.7" rx="39.3" ry="16.4" fill="none" stroke="#f6eaec" stroke-width="0.8"/>
    <path d="M1.5 17 L9 14.5 L12.5 22 L5 28 Z M98.5 17 L91 14.5 L87.5 22 L95 28 Z" fill="#fbf3f4"/>
    <path d="M4 18.5 L8.5 17 L10.5 21.5 L6 25 Z M96 18.5 L91.5 17 L89.5 21.5 L94 25 Z" fill="#e9c4c8"/>
    <rect x="27" y="17.3" width="44.6" height="16" fill="#fbeff1"/>
    <rect x="38" y="13.8" width="21.2" height="4" fill="#fbeff1"/>
    <rect x="26.5" y="17" width="45.6" height="1" fill="#eab4b9"/>
    <g fill="#b8323d">
      <rect x="29.3" y="20" width="1.7" height="5"/><rect x="32.8" y="20" width="1.7" height="5"/>
      <rect x="40.5" y="20" width="1.7" height="5"/><rect x="44.5" y="20" width="1.7" height="5"/><rect x="48.5" y="20" width="1.7" height="5"/><rect x="52.5" y="20" width="1.7" height="5"/><rect x="56.5" y="20" width="1.7" height="5"/>
      <rect x="64.3" y="20" width="1.7" height="5"/><rect x="67.8" y="20" width="1.7" height="5"/>
      <rect x="29.3" y="27" width="1.7" height="4.5"/><rect x="32.8" y="27" width="1.7" height="4.5"/>
      <rect x="40.5" y="27" width="1.7" height="4.5"/><rect x="44.5" y="27" width="1.7" height="4.5"/><rect x="48.3" y="27.5" width="2.2" height="5.8"/><rect x="52.5" y="27" width="1.7" height="4.5"/><rect x="56.5" y="27" width="1.7" height="4.5"/>
      <rect x="64.3" y="27" width="1.7" height="4.5"/><rect x="67.8" y="27" width="1.7" height="4.5"/>
    </g>
    <path d="M3.5 34.5 Q8 38 13 34 Q17 31 21 32.5 Q24 33.5 27 30.5" fill="none" stroke="#f2d21a" stroke-width="2.4"/>
    <path d="M3.5 32 Q8 35.5 13 31.5 Q17 28.5 21 30 Q24 31 26.5 27" fill="none" stroke="#2f86d6" stroke-width="2"/>
    <path d="M97 34.5 Q92.5 38 87.5 34 Q83.5 31 79.5 32.5 Q76.5 33.5 72 30.5" fill="none" stroke="#f2d21a" stroke-width="2.4"/>
    <path d="M97 32 Q92.5 35.5 87.5 31.5 Q83.5 28.5 79.5 30 Q76.5 31 72.5 27" fill="none" stroke="#2f86d6" stroke-width="2"/>
    <rect x="45.5" y="36.5" width="9" height="1" fill="#e8a5aa"/>
  </svg>
<div class="a" style="left:12px;top:82px;width:379px;height:16px;background:#008580;border-radius:8px 0 0 8px"></div>
<div class="a" style="left:44px;top:113px;width:8px;height:8px;border-radius:50%;background:#0f2e66"></div>
<div class="tx" style="left:186px;top:45px;font-size:23.4px;font-weight:bold;color:#c8121b;-webkit-text-stroke:0.3px #c8121b">Доповідь</div>
<div class="jl" style="left:59.6px;top:106.1px;font-size:18.2px;color:#0f3675;color:#1d4a8a"><b style="color:#b5151b">Анастасія Чорна</b> – здобувачка першого</div>
<div class="jl" style="left:59.6px;top:128.0px;font-size:18.2px;color:#0f3675;color:#1d4a8a">(бакалаврського) рівня вищої освіти</div>
<div class="jl" style="left:59.6px;top:149.9px;font-size:18.2px;color:#0f3675;color:#1d4a8a">факультету української філології та</div>
<div class="jl" style="left:59.6px;top:171.8px;font-size:18.2px;color:#0f3675;color:#1d4a8a">соціальних комунікацій ДЗ "Луганський</div>
<div class="jl" style="left:59.6px;top:193.7px;font-size:18.2px;color:#0f3675;color:#1d4a8a">національний університет імені Тараса</div>
<div class="jl last" style="left:59.6px;top:215.6px;font-size:18.2px;color:#0f3675;color:#1d4a8a">Шевченка" (м.Старобільськ)</div>
<div class="tx" style="left:39px;width:430px;text-align:center;top:270.0px;font-size:18.2px;font-style:italic;color:#e0141c;letter-spacing:0.6px">Дослідження національно-культурних</div>
<div class="tx" style="left:39px;width:430px;text-align:center;top:292.0px;font-size:18.2px;font-style:italic;color:#e0141c;letter-spacing:0.6px">особливостей фразеологічних одиниць з</div>
<div class="tx" style="left:39px;width:430px;text-align:center;top:314.0px;font-size:18.2px;font-style:italic;color:#e0141c;letter-spacing:0.6px">елементами кольорів</div>
</div>
</div></div>
<div class="tx" style="left:3.6px;top:249.9px;font-size:8.4px;font-weight:bold;color:#2b2b2b">22</div>
<div class="a" style="left:16px;top:337.0px;width:107.2px;height:80.5px;box-shadow:1px 1px 2px rgba(0,0,0,.35);overflow:hidden">
<div class="a" style="left:0;top:0;width:469px;height:352px;transform:scale(0.2286);transform-origin:0 0">
<div class="a" style="left:0;top:0;width:469px;height:352px;background:#fff">
<div class="a" style="left:0;top:0;width:39px;height:352px;background:#80ca95"></div>
<div class="a" style="left:101px;top:0;width:64px;height:39px;background:#80ca95"></div>
<svg style="left:0;top:0" width="101" height="50" viewBox="0 0 101 50">
    <rect x="0" y="0" width="101" height="50" fill="#c8111b"/>
    <g fill="#f6eaec"><circle cx="97.3" cy="23.7" r="1.51"/><circle cx="97.1" cy="25.9" r="1.44"/><circle cx="96.4" cy="28.1" r="1.34"/><circle cx="95.3" cy="30.3" r="1.34"/><circle cx="93.7" cy="32.3" r="1.15"/><circle cx="91.7" cy="34.4" r="1.10"/><circle cx="89.3" cy="36.3" r="1.46"/><circle cx="86.5" cy="38.0" r="1.51"/><circle cx="83.4" cy="39.7" r="1.56"/><circle cx="79.9" cy="41.2" r="1.38"/><circle cx="76.2" cy="42.5" r="1.11"/><circle cx="72.2" cy="43.6" r="1.43"/><circle cx="68.0" cy="44.6" r="1.42"/><circle cx="63.6" cy="45.3" r="1.26"/><circle cx="59.1" cy="45.9" r="1.34"/><circle cx="54.5" cy="46.2" r="1.15"/><circle cx="49.8" cy="46.3" r="1.29"/><circle cx="45.1" cy="46.2" r="1.18"/><circle cx="40.5" cy="45.9" r="0.94"/><circle cx="36.0" cy="45.3" r="1.14"/><circle cx="31.6" cy="44.6" r="1.13"/><circle cx="27.4" cy="43.6" r="1.59"/><circle cx="23.4" cy="42.5" r="1.24"/><circle cx="19.7" cy="41.2" r="1.16"/><circle cx="16.2" cy="39.7" r="1.07"/><circle cx="13.1" cy="38.0" r="1.06"/><circle cx="10.3" cy="36.3" r="1.14"/><circle cx="7.9" cy="34.4" r="0.99"/><circle cx="5.9" cy="32.3" r="0.91"/><circle cx="4.3" cy="30.3" r="1.51"/><circle cx="3.2" cy="28.1" r="1.22"/><circle cx="2.5" cy="25.9" r="1.21"/><circle cx="2.3" cy="23.7" r="1.30"/><circle cx="2.5" cy="21.5" r="1.11"/><circle cx="3.2" cy="19.3" r="1.02"/><circle cx="4.3" cy="17.1" r="0.95"/><circle cx="5.9" cy="15.1" r="1.11"/><circle cx="7.9" cy="13.0" r="1.12"/><circle cx="10.3" cy="11.1" r="1.41"/><circle cx="13.1" cy="9.4" r="1.29"/><circle cx="16.2" cy="7.7" r="1.56"/><circle cx="19.7" cy="6.2" r="1.14"/><circle cx="23.4" cy="4.9" r="1.54"/><circle cx="27.4" cy="3.8" r="1.31"/><circle cx="31.6" cy="2.8" r="0.96"/><circle cx="36.0" cy="2.1" r="1.03"/><circle cx="40.5" cy="1.5" r="1.31"/><circle cx="45.1" cy="1.2" r="1.59"/><circle cx="49.8" cy="1.1" r="1.15"/><circle cx="54.5" cy="1.2" r="1.44"/><circle cx="59.1" cy="1.5" r="1.20"/><circle cx="63.6" cy="2.1" r="1.51"/><circle cx="68.0" cy="2.8" r="0.95"/><circle cx="72.2" cy="3.8" r="1.24"/><circle cx="76.2" cy="4.9" r="1.53"/><circle cx="79.9" cy="6.2" r="1.09"/><circle cx="83.4" cy="7.7" r="1.08"/><circle cx="86.5" cy="9.4" r="0.92"/><circle cx="89.3" cy="11.1" r="1.02"/><circle cx="91.7" cy="13.0" r="1.09"/><circle cx="93.7" cy="15.1" r="1.39"/><circle cx="95.3" cy="17.1" r="1.05"/><circle cx="96.4" cy="19.3" r="1.18"/><circle cx="97.1" cy="21.5" r="1.04"/></g>
    <path fill-rule="evenodd" fill="#f6eaec" d="M2.3 23.7 A47.5 22.6 0 1 0 97.3 23.7 A47.5 22.6 0 1 0 2.3 23.7 Z M10.3 23.7 A39.5 16.6 0 1 0 89.3 23.7 A39.5 16.6 0 1 0 10.3 23.7 Z"/>
    <g fill="#cf3d48"><circle cx="32.4" cy="7.5" r="0.89"/><circle cx="8.0" cy="25.4" r="0.72"/><circle cx="6.6" cy="24.1" r="0.52"/><circle cx="43.1" cy="3.7" r="0.55"/><circle cx="13.0" cy="10.9" r="0.88"/><circle cx="92.9" cy="27.3" r="0.74"/><circle cx="84.3" cy="14.0" r="0.59"/><circle cx="12.4" cy="14.8" r="0.99"/><circle cx="54.1" cy="3.4" r="0.54"/><circle cx="85.9" cy="34.4" r="0.67"/><circle cx="85.9" cy="15.1" r="0.92"/><circle cx="92.6" cy="22.5" r="0.90"/><circle cx="3.2" cy="22.0" r="0.60"/><circle cx="75.5" cy="6.5" r="0.65"/><circle cx="38.9" cy="41.0" r="0.55"/><circle cx="84.8" cy="13.4" r="0.75"/><circle cx="35.8" cy="41.6" r="1.07"/><circle cx="15.6" cy="8.7" r="0.64"/><circle cx="66.6" cy="3.0" r="1.04"/><circle cx="76.7" cy="41.2" r="0.98"/><circle cx="11.0" cy="30.0" r="0.54"/><circle cx="15.4" cy="12.2" r="0.71"/><circle cx="36.3" cy="6.2" r="1.01"/><circle cx="47.9" cy="4.5" r="0.56"/><circle cx="81.4" cy="8.0" r="0.51"/><circle cx="93.2" cy="25.1" r="0.59"/><circle cx="53.7" cy="1.8" r="0.82"/><circle cx="22.6" cy="38.2" r="1.09"/><circle cx="83.7" cy="38.0" r="0.99"/><circle cx="44.4" cy="44.1" r="1.09"/><circle cx="93.6" cy="17.5" r="0.63"/><circle cx="23.0" cy="9.6" r="0.62"/><circle cx="61.5" cy="42.4" r="1.00"/><circle cx="65.1" cy="42.8" r="0.97"/><circle cx="18.3" cy="37.2" r="0.70"/><circle cx="79.2" cy="7.3" r="1.00"/><circle cx="52.1" cy="43.9" r="0.76"/><circle cx="41.6" cy="6.6" r="1.05"/><circle cx="57.6" cy="42.5" r="0.75"/><circle cx="78.5" cy="8.5" r="0.78"/><circle cx="47.4" cy="44.3" r="0.92"/><circle cx="43.9" cy="3.9" r="0.64"/><circle cx="8.1" cy="31.6" r="0.97"/><circle cx="93.4" cy="19.0" r="0.79"/><circle cx="11.2" cy="12.8" r="0.52"/><circle cx="26.1" cy="7.4" r="1.05"/><circle cx="54.6" cy="43.6" r="0.66"/><circle cx="24.1" cy="5.6" r="0.60"/><circle cx="25.8" cy="8.1" r="0.55"/><circle cx="26.6" cy="4.7" r="0.74"/><circle cx="70.5" cy="41.4" r="0.73"/><circle cx="15.5" cy="34.2" r="0.89"/><circle cx="72.2" cy="38.3" r="0.58"/><circle cx="82.0" cy="37.9" r="1.00"/><circle cx="57.7" cy="42.0" r="0.91"/><circle cx="36.0" cy="5.4" r="1.00"/><circle cx="65.0" cy="3.6" r="0.94"/><circle cx="95.6" cy="23.5" r="0.73"/><circle cx="63.3" cy="4.1" r="0.59"/><circle cx="94.9" cy="21.4" r="0.66"/><circle cx="87.0" cy="33.2" r="0.64"/><circle cx="30.3" cy="7.0" r="0.71"/><circle cx="31.7" cy="39.6" r="0.50"/><circle cx="73.8" cy="39.5" r="0.57"/><circle cx="90.9" cy="33.7" r="1.04"/><circle cx="16.7" cy="10.2" r="1.04"/><circle cx="34.2" cy="4.7" r="0.64"/><circle cx="87.1" cy="35.4" r="0.75"/><circle cx="84.7" cy="10.5" r="0.66"/><circle cx="44.2" cy="44.9" r="1.01"/><circle cx="39.0" cy="43.6" r="1.00"/><circle cx="25.1" cy="5.6" r="0.59"/><circle cx="13.4" cy="12.2" r="0.88"/><circle cx="68.8" cy="5.7" r="0.54"/><circle cx="94.0" cy="30.5" r="1.03"/><circle cx="3.1" cy="23.7" r="0.90"/><circle cx="65.7" cy="43.5" r="0.64"/><circle cx="20.2" cy="37.6" r="0.94"/><circle cx="80.5" cy="11.2" r="0.63"/><circle cx="93.3" cy="23.6" r="0.61"/><circle cx="65.5" cy="44.6" r="0.59"/><circle cx="39.2" cy="42.3" r="1.03"/><circle cx="91.4" cy="15.8" r="0.61"/><circle cx="80.7" cy="38.7" r="0.76"/><circle cx="5.8" cy="22.5" r="0.72"/><circle cx="36.3" cy="42.2" r="0.52"/><circle cx="73.5" cy="42.3" r="0.70"/><circle cx="62.5" cy="44.4" r="0.51"/><circle cx="80.8" cy="36.4" r="0.86"/><circle cx="20.3" cy="12.0" r="0.65"/><circle cx="95.4" cy="27.6" r="1.06"/><circle cx="37.1" cy="40.8" r="0.77"/><circle cx="14.7" cy="10.0" r="0.65"/><circle cx="20.7" cy="37.5" r="0.83"/><circle cx="63.0" cy="4.7" r="0.60"/><circle cx="41.4" cy="40.7" r="1.10"/><circle cx="40.4" cy="41.6" r="0.78"/><circle cx="95.6" cy="22.9" r="0.53"/><circle cx="90.8" cy="18.5" r="1.04"/><circle cx="16.5" cy="37.0" r="0.63"/><circle cx="81.4" cy="9.0" r="0.63"/><circle cx="38.2" cy="6.2" r="0.65"/><circle cx="71.3" cy="42.2" r="0.52"/><circle cx="42.8" cy="4.8" r="0.77"/><circle cx="50.5" cy="2.4" r="0.88"/><circle cx="6.3" cy="23.9" r="0.73"/><circle cx="72.0" cy="38.4" r="0.62"/><circle cx="96.2" cy="23.4" r="1.07"/><circle cx="7.4" cy="16.8" r="0.95"/><circle cx="27.7" cy="38.4" r="0.59"/><circle cx="49.7" cy="43.3" r="0.62"/><circle cx="18.7" cy="8.0" r="1.06"/><circle cx="66.9" cy="42.1" r="0.60"/><circle cx="77.1" cy="5.9" r="0.82"/><circle cx="57.3" cy="41.5" r="0.56"/><circle cx="18.1" cy="35.1" r="0.53"/><circle cx="80.5" cy="12.3" r="0.88"/><circle cx="35.4" cy="5.4" r="0.71"/><circle cx="24.6" cy="7.4" r="0.56"/><circle cx="62.9" cy="41.0" r="0.97"/><circle cx="25.1" cy="42.5" r="0.53"/><circle cx="54.4" cy="44.3" r="0.59"/><circle cx="79.9" cy="8.6" r="0.69"/><circle cx="87.3" cy="36.9" r="0.93"/><circle cx="68.4" cy="39.8" r="0.93"/><circle cx="22.0" cy="41.4" r="0.51"/><circle cx="86.4" cy="15.8" r="0.64"/><circle cx="89.0" cy="29.8" r="0.92"/><circle cx="68.7" cy="40.4" r="0.76"/><circle cx="61.4" cy="4.1" r="1.05"/><circle cx="34.5" cy="7.1" r="0.52"/><circle cx="80.3" cy="38.6" r="1.03"/><circle cx="83.2" cy="38.3" r="0.88"/><circle cx="28.9" cy="5.1" r="0.56"/><circle cx="74.5" cy="10.0" r="0.69"/><circle cx="22.0" cy="40.6" r="0.55"/><circle cx="80.5" cy="8.4" r="0.50"/><circle cx="20.6" cy="35.9" r="1.09"/><circle cx="11.7" cy="30.1" r="0.55"/><circle cx="39.3" cy="41.9" r="0.55"/><circle cx="37.8" cy="41.6" r="0.64"/><circle cx="32.7" cy="7.7" r="1.01"/><circle cx="86.9" cy="11.6" r="0.61"/><circle cx="16.1" cy="12.0" r="0.70"/><circle cx="10.9" cy="18.4" r="1.09"/><circle cx="62.9" cy="5.5" r="0.62"/><circle cx="71.1" cy="41.4" r="0.96"/><circle cx="68.9" cy="40.1" r="0.91"/><circle cx="66.5" cy="43.8" r="0.61"/><circle cx="51.4" cy="5.2" r="0.84"/><circle cx="40.8" cy="44.6" r="0.63"/><circle cx="75.0" cy="6.2" r="1.09"/><circle cx="35.5" cy="3.1" r="0.66"/><circle cx="21.6" cy="6.5" r="0.97"/><circle cx="80.4" cy="38.5" r="0.78"/><circle cx="35.4" cy="40.1" r="0.66"/><circle cx="34.6" cy="7.6" r="1.04"/><circle cx="77.8" cy="8.3" r="1.03"/><circle cx="65.8" cy="42.1" r="0.97"/><circle cx="82.4" cy="9.7" r="0.92"/><circle cx="43.5" cy="41.5" r="0.83"/><circle cx="6.7" cy="22.2" r="0.59"/><circle cx="65.5" cy="39.6" r="0.72"/><circle cx="41.6" cy="45.2" r="0.55"/><circle cx="67.2" cy="43.8" r="0.70"/><circle cx="96.2" cy="24.2" r="0.79"/><circle cx="33.8" cy="40.6" r="0.72"/><circle cx="75.7" cy="10.3" r="0.76"/><circle cx="50.1" cy="45.8" r="0.89"/><circle cx="71.1" cy="41.7" r="0.83"/><circle cx="90.4" cy="28.8" r="0.89"/><circle cx="89.7" cy="31.0" r="0.72"/><circle cx="80.8" cy="37.1" r="0.84"/><circle cx="56.0" cy="2.3" r="0.57"/><circle cx="90.1" cy="21.3" r="0.51"/><circle cx="10.9" cy="30.5" r="0.63"/><circle cx="72.2" cy="9.2" r="0.53"/><circle cx="84.0" cy="34.4" r="0.55"/><circle cx="45.7" cy="43.9" r="0.65"/><circle cx="8.7" cy="15.0" r="0.94"/><circle cx="48.2" cy="3.3" r="0.72"/><circle cx="66.7" cy="7.2" r="0.98"/><circle cx="69.2" cy="39.0" r="0.70"/><circle cx="81.8" cy="38.2" r="1.02"/><circle cx="83.6" cy="38.0" r="0.91"/><circle cx="89.6" cy="16.6" r="0.55"/><circle cx="57.2" cy="42.2" r="1.03"/><circle cx="19.7" cy="8.9" r="0.92"/><circle cx="11.3" cy="29.9" r="0.97"/><circle cx="42.3" cy="44.5" r="0.96"/><circle cx="20.5" cy="8.9" r="0.55"/><circle cx="5.9" cy="26.4" r="1.02"/><circle cx="45.5" cy="44.5" r="1.05"/><circle cx="7.2" cy="28.3" r="0.74"/><circle cx="63.1" cy="45.0" r="0.90"/><circle cx="35.1" cy="42.5" r="1.04"/><circle cx="11.2" cy="15.6" r="0.65"/><circle cx="17.4" cy="11.6" r="0.59"/><circle cx="61.9" cy="7.1" r="0.63"/><circle cx="85.5" cy="12.9" r="0.75"/><circle cx="16.1" cy="13.1" r="1.00"/><circle cx="87.8" cy="31.6" r="0.63"/><circle cx="26.0" cy="9.9" r="0.72"/><circle cx="29.1" cy="42.2" r="0.53"/><circle cx="18.5" cy="36.3" r="0.93"/><circle cx="9.5" cy="28.8" r="0.80"/><circle cx="85.6" cy="12.9" r="0.61"/><circle cx="51.0" cy="6.1" r="0.93"/><circle cx="93.5" cy="23.5" r="0.81"/><circle cx="22.7" cy="9.0" r="0.56"/><circle cx="25.3" cy="38.5" r="0.52"/><circle cx="10.4" cy="33.0" r="0.62"/><circle cx="69.2" cy="5.3" r="1.02"/><circle cx="16.9" cy="38.9" r="1.06"/><circle cx="39.4" cy="44.3" r="0.97"/><circle cx="51.2" cy="45.0" r="1.06"/><circle cx="52.5" cy="3.7" r="0.76"/><circle cx="50.0" cy="1.5" r="0.58"/><circle cx="91.9" cy="29.9" r="0.99"/><circle cx="90.7" cy="29.4" r="0.65"/><circle cx="93.7" cy="24.4" r="0.66"/><circle cx="13.7" cy="14.2" r="0.74"/><circle cx="9.5" cy="25.9" r="1.00"/><circle cx="35.2" cy="40.6" r="0.64"/><circle cx="7.0" cy="18.5" r="0.76"/><circle cx="72.3" cy="5.6" r="0.64"/><circle cx="49.3" cy="45.3" r="0.84"/><circle cx="30.5" cy="7.2" r="0.85"/><circle cx="57.4" cy="4.6" r="1.05"/><circle cx="32.4" cy="39.7" r="1.00"/><circle cx="42.4" cy="42.8" r="0.51"/><circle cx="5.6" cy="26.8" r="0.80"/><circle cx="35.1" cy="44.6" r="0.91"/><circle cx="51.9" cy="5.1" r="0.72"/><circle cx="56.7" cy="41.4" r="1.08"/><circle cx="80.1" cy="8.4" r="0.69"/><circle cx="50.7" cy="5.6" r="1.04"/><circle cx="5.1" cy="19.6" r="0.97"/><circle cx="74.7" cy="5.5" r="0.56"/><circle cx="26.9" cy="5.1" r="1.04"/><circle cx="57.5" cy="45.1" r="0.76"/><circle cx="94.1" cy="23.5" r="1.07"/><circle cx="31.0" cy="41.2" r="0.79"/><circle cx="24.8" cy="9.4" r="0.67"/><circle cx="16.1" cy="33.3" r="0.56"/><circle cx="27.2" cy="39.3" r="0.58"/><circle cx="79.1" cy="7.9" r="0.71"/><circle cx="93.2" cy="24.0" r="0.64"/><circle cx="44.9" cy="6.6" r="0.92"/><circle cx="26.3" cy="42.3" r="0.85"/><circle cx="38.8" cy="4.5" r="0.61"/><circle cx="65.3" cy="5.6" r="0.84"/><circle cx="13.2" cy="33.8" r="0.67"/><circle cx="40.1" cy="42.8" r="0.96"/><circle cx="13.8" cy="13.4" r="0.52"/><circle cx="25.1" cy="39.9" r="0.71"/><circle cx="16.7" cy="9.7" r="0.68"/><circle cx="37.9" cy="2.3" r="0.69"/><circle cx="81.9" cy="36.6" r="0.67"/><circle cx="59.9" cy="2.7" r="0.65"/><circle cx="73.5" cy="39.0" r="0.67"/><circle cx="42.1" cy="43.8" r="0.91"/><circle cx="72.6" cy="39.1" r="0.88"/><circle cx="44.9" cy="3.0" r="0.92"/><circle cx="6.8" cy="17.1" r="0.75"/><circle cx="14.2" cy="33.4" r="0.90"/><circle cx="91.8" cy="16.8" r="0.68"/><circle cx="74.8" cy="8.4" r="0.90"/><circle cx="75.3" cy="39.1" r="0.57"/><circle cx="12.0" cy="15.6" r="0.78"/><circle cx="9.1" cy="33.8" r="1.09"/><circle cx="55.7" cy="5.6" r="0.79"/><circle cx="90.2" cy="30.5" r="0.88"/><circle cx="91.7" cy="30.8" r="0.65"/><circle cx="24.9" cy="6.9" r="0.52"/><circle cx="76.1" cy="39.5" r="0.68"/><circle cx="17.3" cy="37.0" r="1.00"/><circle cx="18.9" cy="38.9" r="0.69"/><circle cx="57.4" cy="4.2" r="0.91"/><circle cx="4.9" cy="20.9" r="0.61"/><circle cx="94.3" cy="29.3" r="0.99"/><circle cx="6.8" cy="32.0" r="0.87"/><circle cx="93.4" cy="22.9" r="0.89"/><circle cx="44.4" cy="4.5" r="0.90"/><circle cx="25.6" cy="4.9" r="0.82"/><circle cx="56.6" cy="5.8" r="0.81"/><circle cx="58.1" cy="4.2" r="0.74"/><circle cx="8.1" cy="20.9" r="1.02"/><circle cx="74.4" cy="5.8" r="1.09"/><circle cx="71.0" cy="5.2" r="1.00"/><circle cx="94.1" cy="26.7" r="0.96"/><circle cx="14.3" cy="36.6" r="0.53"/><circle cx="17.3" cy="35.2" r="0.70"/><circle cx="5.2" cy="28.6" r="0.56"/><circle cx="37.9" cy="7.2" r="1.03"/><circle cx="85.7" cy="37.7" r="0.52"/><circle cx="18.7" cy="38.6" r="0.91"/><circle cx="39.2" cy="41.1" r="0.87"/><circle cx="8.4" cy="15.8" r="0.63"/><circle cx="4.3" cy="26.6" r="0.96"/></g>
    <ellipse cx="49.8" cy="23.7" rx="39.3" ry="16.4" fill="none" stroke="#f6eaec" stroke-width="0.8"/>
    <path d="M1.5 17 L9 14.5 L12.5 22 L5 28 Z M98.5 17 L91 14.5 L87.5 22 L95 28 Z" fill="#fbf3f4"/>
    <path d="M4 18.5 L8.5 17 L10.5 21.5 L6 25 Z M96 18.5 L91.5 17 L89.5 21.5 L94 25 Z" fill="#e9c4c8"/>
    <rect x="27" y="17.3" width="44.6" height="16" fill="#fbeff1"/>
    <rect x="38" y="13.8" width="21.2" height="4" fill="#fbeff1"/>
    <rect x="26.5" y="17" width="45.6" height="1" fill="#eab4b9"/>
    <g fill="#b8323d">
      <rect x="29.3" y="20" width="1.7" height="5"/><rect x="32.8" y="20" width="1.7" height="5"/>
      <rect x="40.5" y="20" width="1.7" height="5"/><rect x="44.5" y="20" width="1.7" height="5"/><rect x="48.5" y="20" width="1.7" height="5"/><rect x="52.5" y="20" width="1.7" height="5"/><rect x="56.5" y="20" width="1.7" height="5"/>
      <rect x="64.3" y="20" width="1.7" height="5"/><rect x="67.8" y="20" width="1.7" height="5"/>
      <rect x="29.3" y="27" width="1.7" height="4.5"/><rect x="32.8" y="27" width="1.7" height="4.5"/>
      <rect x="40.5" y="27" width="1.7" height="4.5"/><rect x="44.5" y="27" width="1.7" height="4.5"/><rect x="48.3" y="27.5" width="2.2" height="5.8"/><rect x="52.5" y="27" width="1.7" height="4.5"/><rect x="56.5" y="27" width="1.7" height="4.5"/>
      <rect x="64.3" y="27" width="1.7" height="4.5"/><rect x="67.8" y="27" width="1.7" height="4.5"/>
    </g>
    <path d="M3.5 34.5 Q8 38 13 34 Q17 31 21 32.5 Q24 33.5 27 30.5" fill="none" stroke="#f2d21a" stroke-width="2.4"/>
    <path d="M3.5 32 Q8 35.5 13 31.5 Q17 28.5 21 30 Q24 31 26.5 27" fill="none" stroke="#2f86d6" stroke-width="2"/>
    <path d="M97 34.5 Q92.5 38 87.5 34 Q83.5 31 79.5 32.5 Q76.5 33.5 72 30.5" fill="none" stroke="#f2d21a" stroke-width="2.4"/>
    <path d="M97 32 Q92.5 35.5 87.5 31.5 Q83.5 28.5 79.5 30 Q76.5 31 72.5 27" fill="none" stroke="#2f86d6" stroke-width="2"/>
    <rect x="45.5" y="36.5" width="9" height="1" fill="#e8a5aa"/>
  </svg>
<div class="a" style="left:12px;top:82px;width:379px;height:16px;background:#008580;border-radius:8px 0 0 8px"></div>
<div class="a" style="left:44px;top:113px;width:8px;height:8px;border-radius:50%;background:#0f2e66"></div>
<div class="tx" style="left:186px;top:45px;font-size:23.4px;font-weight:bold;color:#c8121b;-webkit-text-stroke:0.3px #c8121b">Доповідь</div>
<div class="jl" style="left:59.6px;top:106.1px;font-size:18.2px;color:#0f3675;color:#1d4a8a"><b style="color:#b5151b">Дмитро Петренко</b> – здобувач першого</div>
<div class="jl" style="left:59.6px;top:128.0px;font-size:18.2px;color:#0f3675;color:#1d4a8a">(бакалаврського) рівня вищої освіти</div>
<div class="jl" style="left:59.6px;top:149.9px;font-size:18.2px;color:#0f3675;color:#1d4a8a">факультету української філології та</div>
<div class="jl" style="left:59.6px;top:171.8px;font-size:18.2px;color:#0f3675;color:#1d4a8a">соціальних комунікацій ДЗ «Луганський</div>
<div class="jl" style="left:59.6px;top:193.7px;font-size:18.2px;color:#0f3675;color:#1d4a8a">національний університет імені Тараса</div>
<div class="jl last" style="left:59.6px;top:215.6px;font-size:18.2px;color:#0f3675;color:#1d4a8a">Шевченка» (м.Старобільськ)</div>
<div class="tx" style="left:39px;width:430px;text-align:center;top:270.0px;font-size:18.2px;font-style:italic;color:#e0141c;letter-spacing:0.6px">Використання засобів мовної гри пісень</div>
<div class="tx" style="left:39px;width:430px;text-align:center;top:292.0px;font-size:18.2px;font-style:italic;color:#e0141c;letter-spacing:0.6px">Святослава Вакарчука (на матеріалі пісень</div>
<div class="tx" style="left:39px;width:430px;text-align:center;top:314.0px;font-size:18.2px;font-style:italic;color:#e0141c;letter-spacing:0.6px">«Океан» «Ельзи» музики)</div>
</div>
</div></div>
<div class="tx" style="left:3.6px;top:339.7px;font-size:8.4px;font-weight:bold;color:#2b2b2b">23</div>
<div class="a" style="left:16px;top:425.8px;width:107.2px;height:80.5px;box-shadow:1px 1px 2px rgba(0,0,0,.35);overflow:hidden">
<div class="a" style="left:0;top:0;width:469px;height:352px;transform:scale(0.2286);transform-origin:0 0">
<div class="a" style="left:0;top:0;width:469px;height:352px;background:#fff">
<div class="a" style="left:0;top:0;width:39px;height:352px;background:#80ca95"></div>
<div class="a" style="left:101px;top:0;width:64px;height:39px;background:#80ca95"></div>
<svg style="left:0;top:0" width="101" height="50" viewBox="0 0 101 50">
    <rect x="0" y="0" width="101" height="50" fill="#c8111b"/>
    <g fill="#f6eaec"><circle cx="97.3" cy="23.7" r="1.51"/><circle cx="97.1" cy="25.9" r="1.44"/><circle cx="96.4" cy="28.1" r="1.34"/><circle cx="95.3" cy="30.3" r="1.34"/><circle cx="93.7" cy="32.3" r="1.15"/><circle cx="91.7" cy="34.4" r="1.10"/><circle cx="89.3" cy="36.3" r="1.46"/><circle cx="86.5" cy="38.0" r="1.51"/><circle cx="83.4" cy="39.7" r="1.56"/><circle cx="79.9" cy="41.2" r="1.38"/><circle cx="76.2" cy="42.5" r="1.11"/><circle cx="72.2" cy="43.6" r="1.43"/><circle cx="68.0" cy="44.6" r="1.42"/><circle cx="63.6" cy="45.3" r="1.26"/><circle cx="59.1" cy="45.9" r="1.34"/><circle cx="54.5" cy="46.2" r="1.15"/><circle cx="49.8" cy="46.3" r="1.29"/><circle cx="45.1" cy="46.2" r="1.18"/><circle cx="40.5" cy="45.9" r="0.94"/><circle cx="36.0" cy="45.3" r="1.14"/><circle cx="31.6" cy="44.6" r="1.13"/><circle cx="27.4" cy="43.6" r="1.59"/><circle cx="23.4" cy="42.5" r="1.24"/><circle cx="19.7" cy="41.2" r="1.16"/><circle cx="16.2" cy="39.7" r="1.07"/><circle cx="13.1" cy="38.0" r="1.06"/><circle cx="10.3" cy="36.3" r="1.14"/><circle cx="7.9" cy="34.4" r="0.99"/><circle cx="5.9" cy="32.3" r="0.91"/><circle cx="4.3" cy="30.3" r="1.51"/><circle cx="3.2" cy="28.1" r="1.22"/><circle cx="2.5" cy="25.9" r="1.21"/><circle cx="2.3" cy="23.7" r="1.30"/><circle cx="2.5" cy="21.5" r="1.11"/><circle cx="3.2" cy="19.3" r="1.02"/><circle cx="4.3" cy="17.1" r="0.95"/><circle cx="5.9" cy="15.1" r="1.11"/><circle cx="7.9" cy="13.0" r="1.12"/><circle cx="10.3" cy="11.1" r="1.41"/><circle cx="13.1" cy="9.4" r="1.29"/><circle cx="16.2" cy="7.7" r="1.56"/><circle cx="19.7" cy="6.2" r="1.14"/><circle cx="23.4" cy="4.9" r="1.54"/><circle cx="27.4" cy="3.8" r="1.31"/><circle cx="31.6" cy="2.8" r="0.96"/><circle cx="36.0" cy="2.1" r="1.03"/><circle cx="40.5" cy="1.5" r="1.31"/><circle cx="45.1" cy="1.2" r="1.59"/><circle cx="49.8" cy="1.1" r="1.15"/><circle cx="54.5" cy="1.2" r="1.44"/><circle cx="59.1" cy="1.5" r="1.20"/><circle cx="63.6" cy="2.1" r="1.51"/><circle cx="68.0" cy="2.8" r="0.95"/><circle cx="72.2" cy="3.8" r="1.24"/><circle cx="76.2" cy="4.9" r="1.53"/><circle cx="79.9" cy="6.2" r="1.09"/><circle cx="83.4" cy="7.7" r="1.08"/><circle cx="86.5" cy="9.4" r="0.92"/><circle cx="89.3" cy="11.1" r="1.02"/><circle cx="91.7" cy="13.0" r="1.09"/><circle cx="93.7" cy="15.1" r="1.39"/><circle cx="95.3" cy="17.1" r="1.05"/><circle cx="96.4" cy="19.3" r="1.18"/><circle cx="97.1" cy="21.5" r="1.04"/></g>
    <path fill-rule="evenodd" fill="#f6eaec" d="M2.3 23.7 A47.5 22.6 0 1 0 97.3 23.7 A47.5 22.6 0 1 0 2.3 23.7 Z M10.3 23.7 A39.5 16.6 0 1 0 89.3 23.7 A39.5 16.6 0 1 0 10.3 23.7 Z"/>
    <g fill="#cf3d48"><circle cx="32.4" cy="7.5" r="0.89"/><circle cx="8.0" cy="25.4" r="0.72"/><circle cx="6.6" cy="24.1" r="0.52"/><circle cx="43.1" cy="3.7" r="0.55"/><circle cx="13.0" cy="10.9" r="0.88"/><circle cx="92.9" cy="27.3" r="0.74"/><circle cx="84.3" cy="14.0" r="0.59"/><circle cx="12.4" cy="14.8" r="0.99"/><circle cx="54.1" cy="3.4" r="0.54"/><circle cx="85.9" cy="34.4" r="0.67"/><circle cx="85.9" cy="15.1" r="0.92"/><circle cx="92.6" cy="22.5" r="0.90"/><circle cx="3.2" cy="22.0" r="0.60"/><circle cx="75.5" cy="6.5" r="0.65"/><circle cx="38.9" cy="41.0" r="0.55"/><circle cx="84.8" cy="13.4" r="0.75"/><circle cx="35.8" cy="41.6" r="1.07"/><circle cx="15.6" cy="8.7" r="0.64"/><circle cx="66.6" cy="3.0" r="1.04"/><circle cx="76.7" cy="41.2" r="0.98"/><circle cx="11.0" cy="30.0" r="0.54"/><circle cx="15.4" cy="12.2" r="0.71"/><circle cx="36.3" cy="6.2" r="1.01"/><circle cx="47.9" cy="4.5" r="0.56"/><circle cx="81.4" cy="8.0" r="0.51"/><circle cx="93.2" cy="25.1" r="0.59"/><circle cx="53.7" cy="1.8" r="0.82"/><circle cx="22.6" cy="38.2" r="1.09"/><circle cx="83.7" cy="38.0" r="0.99"/><circle cx="44.4" cy="44.1" r="1.09"/><circle cx="93.6" cy="17.5" r="0.63"/><circle cx="23.0" cy="9.6" r="0.62"/><circle cx="61.5" cy="42.4" r="1.00"/><circle cx="65.1" cy="42.8" r="0.97"/><circle cx="18.3" cy="37.2" r="0.70"/><circle cx="79.2" cy="7.3" r="1.00"/><circle cx="52.1" cy="43.9" r="0.76"/><circle cx="41.6" cy="6.6" r="1.05"/><circle cx="57.6" cy="42.5" r="0.75"/><circle cx="78.5" cy="8.5" r="0.78"/><circle cx="47.4" cy="44.3" r="0.92"/><circle cx="43.9" cy="3.9" r="0.64"/><circle cx="8.1" cy="31.6" r="0.97"/><circle cx="93.4" cy="19.0" r="0.79"/><circle cx="11.2" cy="12.8" r="0.52"/><circle cx="26.1" cy="7.4" r="1.05"/><circle cx="54.6" cy="43.6" r="0.66"/><circle cx="24.1" cy="5.6" r="0.60"/><circle cx="25.8" cy="8.1" r="0.55"/><circle cx="26.6" cy="4.7" r="0.74"/><circle cx="70.5" cy="41.4" r="0.73"/><circle cx="15.5" cy="34.2" r="0.89"/><circle cx="72.2" cy="38.3" r="0.58"/><circle cx="82.0" cy="37.9" r="1.00"/><circle cx="57.7" cy="42.0" r="0.91"/><circle cx="36.0" cy="5.4" r="1.00"/><circle cx="65.0" cy="3.6" r="0.94"/><circle cx="95.6" cy="23.5" r="0.73"/><circle cx="63.3" cy="4.1" r="0.59"/><circle cx="94.9" cy="21.4" r="0.66"/><circle cx="87.0" cy="33.2" r="0.64"/><circle cx="30.3" cy="7.0" r="0.71"/><circle cx="31.7" cy="39.6" r="0.50"/><circle cx="73.8" cy="39.5" r="0.57"/><circle cx="90.9" cy="33.7" r="1.04"/><circle cx="16.7" cy="10.2" r="1.04"/><circle cx="34.2" cy="4.7" r="0.64"/><circle cx="87.1" cy="35.4" r="0.75"/><circle cx="84.7" cy="10.5" r="0.66"/><circle cx="44.2" cy="44.9" r="1.01"/><circle cx="39.0" cy="43.6" r="1.00"/><circle cx="25.1" cy="5.6" r="0.59"/><circle cx="13.4" cy="12.2" r="0.88"/><circle cx="68.8" cy="5.7" r="0.54"/><circle cx="94.0" cy="30.5" r="1.03"/><circle cx="3.1" cy="23.7" r="0.90"/><circle cx="65.7" cy="43.5" r="0.64"/><circle cx="20.2" cy="37.6" r="0.94"/><circle cx="80.5" cy="11.2" r="0.63"/><circle cx="93.3" cy="23.6" r="0.61"/><circle cx="65.5" cy="44.6" r="0.59"/><circle cx="39.2" cy="42.3" r="1.03"/><circle cx="91.4" cy="15.8" r="0.61"/><circle cx="80.7" cy="38.7" r="0.76"/><circle cx="5.8" cy="22.5" r="0.72"/><circle cx="36.3" cy="42.2" r="0.52"/><circle cx="73.5" cy="42.3" r="0.70"/><circle cx="62.5" cy="44.4" r="0.51"/><circle cx="80.8" cy="36.4" r="0.86"/><circle cx="20.3" cy="12.0" r="0.65"/><circle cx="95.4" cy="27.6" r="1.06"/><circle cx="37.1" cy="40.8" r="0.77"/><circle cx="14.7" cy="10.0" r="0.65"/><circle cx="20.7" cy="37.5" r="0.83"/><circle cx="63.0" cy="4.7" r="0.60"/><circle cx="41.4" cy="40.7" r="1.10"/><circle cx="40.4" cy="41.6" r="0.78"/><circle cx="95.6" cy="22.9" r="0.53"/><circle cx="90.8" cy="18.5" r="1.04"/><circle cx="16.5" cy="37.0" r="0.63"/><circle cx="81.4" cy="9.0" r="0.63"/><circle cx="38.2" cy="6.2" r="0.65"/><circle cx="71.3" cy="42.2" r="0.52"/><circle cx="42.8" cy="4.8" r="0.77"/><circle cx="50.5" cy="2.4" r="0.88"/><circle cx="6.3" cy="23.9" r="0.73"/><circle cx="72.0" cy="38.4" r="0.62"/><circle cx="96.2" cy="23.4" r="1.07"/><circle cx="7.4" cy="16.8" r="0.95"/><circle cx="27.7" cy="38.4" r="0.59"/><circle cx="49.7" cy="43.3" r="0.62"/><circle cx="18.7" cy="8.0" r="1.06"/><circle cx="66.9" cy="42.1" r="0.60"/><circle cx="77.1" cy="5.9" r="0.82"/><circle cx="57.3" cy="41.5" r="0.56"/><circle cx="18.1" cy="35.1" r="0.53"/><circle cx="80.5" cy="12.3" r="0.88"/><circle cx="35.4" cy="5.4" r="0.71"/><circle cx="24.6" cy="7.4" r="0.56"/><circle cx="62.9" cy="41.0" r="0.97"/><circle cx="25.1" cy="42.5" r="0.53"/><circle cx="54.4" cy="44.3" r="0.59"/><circle cx="79.9" cy="8.6" r="0.69"/><circle cx="87.3" cy="36.9" r="0.93"/><circle cx="68.4" cy="39.8" r="0.93"/><circle cx="22.0" cy="41.4" r="0.51"/><circle cx="86.4" cy="15.8" r="0.64"/><circle cx="89.0" cy="29.8" r="0.92"/><circle cx="68.7" cy="40.4" r="0.76"/><circle cx="61.4" cy="4.1" r="1.05"/><circle cx="34.5" cy="7.1" r="0.52"/><circle cx="80.3" cy="38.6" r="1.03"/><circle cx="83.2" cy="38.3" r="0.88"/><circle cx="28.9" cy="5.1" r="0.56"/><circle cx="74.5" cy="10.0" r="0.69"/><circle cx="22.0" cy="40.6" r="0.55"/><circle cx="80.5" cy="8.4" r="0.50"/><circle cx="20.6" cy="35.9" r="1.09"/><circle cx="11.7" cy="30.1" r="0.55"/><circle cx="39.3" cy="41.9" r="0.55"/><circle cx="37.8" cy="41.6" r="0.64"/><circle cx="32.7" cy="7.7" r="1.01"/><circle cx="86.9" cy="11.6" r="0.61"/><circle cx="16.1" cy="12.0" r="0.70"/><circle cx="10.9" cy="18.4" r="1.09"/><circle cx="62.9" cy="5.5" r="0.62"/><circle cx="71.1" cy="41.4" r="0.96"/><circle cx="68.9" cy="40.1" r="0.91"/><circle cx="66.5" cy="43.8" r="0.61"/><circle cx="51.4" cy="5.2" r="0.84"/><circle cx="40.8" cy="44.6" r="0.63"/><circle cx="75.0" cy="6.2" r="1.09"/><circle cx="35.5" cy="3.1" r="0.66"/><circle cx="21.6" cy="6.5" r="0.97"/><circle cx="80.4" cy="38.5" r="0.78"/><circle cx="35.4" cy="40.1" r="0.66"/><circle cx="34.6" cy="7.6" r="1.04"/><circle cx="77.8" cy="8.3" r="1.03"/><circle cx="65.8" cy="42.1" r="0.97"/><circle cx="82.4" cy="9.7" r="0.92"/><circle cx="43.5" cy="41.5" r="0.83"/><circle cx="6.7" cy="22.2" r="0.59"/><circle cx="65.5" cy="39.6" r="0.72"/><circle cx="41.6" cy="45.2" r="0.55"/><circle cx="67.2" cy="43.8" r="0.70"/><circle cx="96.2" cy="24.2" r="0.79"/><circle cx="33.8" cy="40.6" r="0.72"/><circle cx="75.7" cy="10.3" r="0.76"/><circle cx="50.1" cy="45.8" r="0.89"/><circle cx="71.1" cy="41.7" r="0.83"/><circle cx="90.4" cy="28.8" r="0.89"/><circle cx="89.7" cy="31.0" r="0.72"/><circle cx="80.8" cy="37.1" r="0.84"/><circle cx="56.0" cy="2.3" r="0.57"/><circle cx="90.1" cy="21.3" r="0.51"/><circle cx="10.9" cy="30.5" r="0.63"/><circle cx="72.2" cy="9.2" r="0.53"/><circle cx="84.0" cy="34.4" r="0.55"/><circle cx="45.7" cy="43.9" r="0.65"/><circle cx="8.7" cy="15.0" r="0.94"/><circle cx="48.2" cy="3.3" r="0.72"/><circle cx="66.7" cy="7.2" r="0.98"/><circle cx="69.2" cy="39.0" r="0.70"/><circle cx="81.8" cy="38.2" r="1.02"/><circle cx="83.6" cy="38.0" r="0.91"/><circle cx="89.6" cy="16.6" r="0.55"/><circle cx="57.2" cy="42.2" r="1.03"/><circle cx="19.7" cy="8.9" r="0.92"/><circle cx="11.3" cy="29.9" r="0.97"/><circle cx="42.3" cy="44.5" r="0.96"/><circle cx="20.5" cy="8.9" r="0.55"/><circle cx="5.9" cy="26.4" r="1.02"/><circle cx="45.5" cy="44.5" r="1.05"/><circle cx="7.2" cy="28.3" r="0.74"/><circle cx="63.1" cy="45.0" r="0.90"/><circle cx="35.1" cy="42.5" r="1.04"/><circle cx="11.2" cy="15.6" r="0.65"/><circle cx="17.4" cy="11.6" r="0.59"/><circle cx="61.9" cy="7.1" r="0.63"/><circle cx="85.5" cy="12.9" r="0.75"/><circle cx="16.1" cy="13.1" r="1.00"/><circle cx="87.8" cy="31.6" r="0.63"/><circle cx="26.0" cy="9.9" r="0.72"/><circle cx="29.1" cy="42.2" r="0.53"/><circle cx="18.5" cy="36.3" r="0.93"/><circle cx="9.5" cy="28.8" r="0.80"/><circle cx="85.6" cy="12.9" r="0.61"/><circle cx="51.0" cy="6.1" r="0.93"/><circle cx="93.5" cy="23.5" r="0.81"/><circle cx="22.7" cy="9.0" r="0.56"/><circle cx="25.3" cy="38.5" r="0.52"/><circle cx="10.4" cy="33.0" r="0.62"/><circle cx="69.2" cy="5.3" r="1.02"/><circle cx="16.9" cy="38.9" r="1.06"/><circle cx="39.4" cy="44.3" r="0.97"/><circle cx="51.2" cy="45.0" r="1.06"/><circle cx="52.5" cy="3.7" r="0.76"/><circle cx="50.0" cy="1.5" r="0.58"/><circle cx="91.9" cy="29.9" r="0.99"/><circle cx="90.7" cy="29.4" r="0.65"/><circle cx="93.7" cy="24.4" r="0.66"/><circle cx="13.7" cy="14.2" r="0.74"/><circle cx="9.5" cy="25.9" r="1.00"/><circle cx="35.2" cy="40.6" r="0.64"/><circle cx="7.0" cy="18.5" r="0.76"/><circle cx="72.3" cy="5.6" r="0.64"/><circle cx="49.3" cy="45.3" r="0.84"/><circle cx="30.5" cy="7.2" r="0.85"/><circle cx="57.4" cy="4.6" r="1.05"/><circle cx="32.4" cy="39.7" r="1.00"/><circle cx="42.4" cy="42.8" r="0.51"/><circle cx="5.6" cy="26.8" r="0.80"/><circle cx="35.1" cy="44.6" r="0.91"/><circle cx="51.9" cy="5.1" r="0.72"/><circle cx="56.7" cy="41.4" r="1.08"/><circle cx="80.1" cy="8.4" r="0.69"/><circle cx="50.7" cy="5.6" r="1.04"/><circle cx="5.1" cy="19.6" r="0.97"/><circle cx="74.7" cy="5.5" r="0.56"/><circle cx="26.9" cy="5.1" r="1.04"/><circle cx="57.5" cy="45.1" r="0.76"/><circle cx="94.1" cy="23.5" r="1.07"/><circle cx="31.0" cy="41.2" r="0.79"/><circle cx="24.8" cy="9.4" r="0.67"/><circle cx="16.1" cy="33.3" r="0.56"/><circle cx="27.2" cy="39.3" r="0.58"/><circle cx="79.1" cy="7.9" r="0.71"/><circle cx="93.2" cy="24.0" r="0.64"/><circle cx="44.9" cy="6.6" r="0.92"/><circle cx="26.3" cy="42.3" r="0.85"/><circle cx="38.8" cy="4.5" r="0.61"/><circle cx="65.3" cy="5.6" r="0.84"/><circle cx="13.2" cy="33.8" r="0.67"/><circle cx="40.1" cy="42.8" r="0.96"/><circle cx="13.8" cy="13.4" r="0.52"/><circle cx="25.1" cy="39.9" r="0.71"/><circle cx="16.7" cy="9.7" r="0.68"/><circle cx="37.9" cy="2.3" r="0.69"/><circle cx="81.9" cy="36.6" r="0.67"/><circle cx="59.9" cy="2.7" r="0.65"/><circle cx="73.5" cy="39.0" r="0.67"/><circle cx="42.1" cy="43.8" r="0.91"/><circle cx="72.6" cy="39.1" r="0.88"/><circle cx="44.9" cy="3.0" r="0.92"/><circle cx="6.8" cy="17.1" r="0.75"/><circle cx="14.2" cy="33.4" r="0.90"/><circle cx="91.8" cy="16.8" r="0.68"/><circle cx="74.8" cy="8.4" r="0.90"/><circle cx="75.3" cy="39.1" r="0.57"/><circle cx="12.0" cy="15.6" r="0.78"/><circle cx="9.1" cy="33.8" r="1.09"/><circle cx="55.7" cy="5.6" r="0.79"/><circle cx="90.2" cy="30.5" r="0.88"/><circle cx="91.7" cy="30.8" r="0.65"/><circle cx="24.9" cy="6.9" r="0.52"/><circle cx="76.1" cy="39.5" r="0.68"/><circle cx="17.3" cy="37.0" r="1.00"/><circle cx="18.9" cy="38.9" r="0.69"/><circle cx="57.4" cy="4.2" r="0.91"/><circle cx="4.9" cy="20.9" r="0.61"/><circle cx="94.3" cy="29.3" r="0.99"/><circle cx="6.8" cy="32.0" r="0.87"/><circle cx="93.4" cy="22.9" r="0.89"/><circle cx="44.4" cy="4.5" r="0.90"/><circle cx="25.6" cy="4.9" r="0.82"/><circle cx="56.6" cy="5.8" r="0.81"/><circle cx="58.1" cy="4.2" r="0.74"/><circle cx="8.1" cy="20.9" r="1.02"/><circle cx="74.4" cy="5.8" r="1.09"/><circle cx="71.0" cy="5.2" r="1.00"/><circle cx="94.1" cy="26.7" r="0.96"/><circle cx="14.3" cy="36.6" r="0.53"/><circle cx="17.3" cy="35.2" r="0.70"/><circle cx="5.2" cy="28.6" r="0.56"/><circle cx="37.9" cy="7.2" r="1.03"/><circle cx="85.7" cy="37.7" r="0.52"/><circle cx="18.7" cy="38.6" r="0.91"/><circle cx="39.2" cy="41.1" r="0.87"/><circle cx="8.4" cy="15.8" r="0.63"/><circle cx="4.3" cy="26.6" r="0.96"/></g>
    <ellipse cx="49.8" cy="23.7" rx="39.3" ry="16.4" fill="none" stroke="#f6eaec" stroke-width="0.8"/>
    <path d="M1.5 17 L9 14.5 L12.5 22 L5 28 Z M98.5 17 L91 14.5 L87.5 22 L95 28 Z" fill="#fbf3f4"/>
    <path d="M4 18.5 L8.5 17 L10.5 21.5 L6 25 Z M96 18.5 L91.5 17 L89.5 21.5 L94 25 Z" fill="#e9c4c8"/>
    <rect x="27" y="17.3" width="44.6" height="16" fill="#fbeff1"/>
    <rect x="38" y="13.8" width="21.2" height="4" fill="#fbeff1"/>
    <rect x="26.5" y="17" width="45.6" height="1" fill="#eab4b9"/>
    <g fill="#b8323d">
      <rect x="29.3" y="20" width="1.7" height="5"/><rect x="32.8" y="20" width="1.7" height="5"/>
      <rect x="40.5" y="20" width="1.7" height="5"/><rect x="44.5" y="20" width="1.7" height="5"/><rect x="48.5" y="20" width="1.7" height="5"/><rect x="52.5" y="20" width="1.7" height="5"/><rect x="56.5" y="20" width="1.7" height="5"/>
      <rect x="64.3" y="20" width="1.7" height="5"/><rect x="67.8" y="20" width="1.7" height="5"/>
      <rect x="29.3" y="27" width="1.7" height="4.5"/><rect x="32.8" y="27" width="1.7" height="4.5"/>
      <rect x="40.5" y="27" width="1.7" height="4.5"/><rect x="44.5" y="27" width="1.7" height="4.5"/><rect x="48.3" y="27.5" width="2.2" height="5.8"/><rect x="52.5" y="27" width="1.7" height="4.5"/><rect x="56.5" y="27" width="1.7" height="4.5"/>
      <rect x="64.3" y="27" width="1.7" height="4.5"/><rect x="67.8" y="27" width="1.7" height="4.5"/>
    </g>
    <path d="M3.5 34.5 Q8 38 13 34 Q17 31 21 32.5 Q24 33.5 27 30.5" fill="none" stroke="#f2d21a" stroke-width="2.4"/>
    <path d="M3.5 32 Q8 35.5 13 31.5 Q17 28.5 21 30 Q24 31 26.5 27" fill="none" stroke="#2f86d6" stroke-width="2"/>
    <path d="M97 34.5 Q92.5 38 87.5 34 Q83.5 31 79.5 32.5 Q76.5 33.5 72 30.5" fill="none" stroke="#f2d21a" stroke-width="2.4"/>
    <path d="M97 32 Q92.5 35.5 87.5 31.5 Q83.5 28.5 79.5 30 Q76.5 31 72.5 27" fill="none" stroke="#2f86d6" stroke-width="2"/>
    <rect x="45.5" y="36.5" width="9" height="1" fill="#e8a5aa"/>
  </svg>
<div class="a" style="left:12px;top:82px;width:379px;height:16px;background:#008580;border-radius:8px 0 0 8px"></div>
<div class="a" style="left:44px;top:113px;width:8px;height:8px;border-radius:50%;background:#0f2e66"></div>
<div class="tx" style="left:186px;top:45px;font-size:23.4px;font-weight:bold;color:#c8121b;-webkit-text-stroke:0.3px #c8121b">Доповідь</div>
<div class="jl" style="left:59.6px;top:106.1px;font-size:18.2px;color:#0f3675;color:#1d4a8a"><b style="color:#b5151b">Катерина Хрипун</b> – здобувачка освіти</div>
<div class="jl" style="left:59.6px;top:128.0px;font-size:18.2px;color:#0f3675;color:#1d4a8a">першого кваліфікаційного рівня (3 курс)</div>
<div class="jl" style="left:59.6px;top:149.9px;font-size:18.2px;color:#0f3675;color:#1d4a8a">спеціальності «Початкова освіта. Українська</div>
<div class="jl" style="left:59.6px;top:171.8px;font-size:18.2px;color:#0f3675;color:#1d4a8a">мова і література» навчально-наукового</div>
<div class="jl" style="left:59.6px;top:193.7px;font-size:18.2px;color:#0f3675;color:#1d4a8a">інституту педагогіки та психології ДЗ</div>
<div class="jl" style="left:59.6px;top:215.6px;font-size:18.2px;color:#0f3675;color:#1d4a8a">«Луганський національний університет імені</div>
<div class="jl last" style="left:59.6px;top:237.5px;font-size:18.2px;color:#0f3675;color:#1d4a8a">Тараса Шевченка» (м.Старобільськ)</div>
<div class="tx" style="left:39px;width:430px;text-align:center;top:290.0px;font-size:18.2px;font-style:italic;color:#e0141c;letter-spacing:0.6px">Технології ознайомлення молодших школярів</div>
<div class="tx" style="left:39px;width:430px;text-align:center;top:312.0px;font-size:18.2px;font-style:italic;color:#e0141c;letter-spacing:0.6px">із біографією українських письменників</div>
</div>
</div></div>
<div class="tx" style="left:3.6px;top:428.5px;font-size:8.4px;font-weight:bold;color:#2b2b2b">24</div>

<div class="a" style="left:144px;top:137px;width:744px;height:4px;background:linear-gradient(rgba(160,167,176,.5),rgba(201,206,214,0))"></div>
<!-- notes -->
<div class="a" style="left:144px;top:476px;width:756px;height:3px;background:#eef0f3"></div>
<div class="a" style="left:144px;top:479px;width:756px;height:1px;background:#b0b6be"></div>
<div class="a" style="left:144px;top:480px;width:756px;height:32px;background:#fff"></div>
<!-- right scrollbars -->
<div class="a" style="left:888px;top:137px;width:12px;height:339px;background:linear-gradient(90deg,#d9dee5,#e6e9ee)"></div>
<div class="a" style="left:888px;top:480px;width:12px;height:32px;background:linear-gradient(90deg,#e0e4ea,#eceff3)"></div>

<!-- status bar -->
<div class="a" style="left:0;top:512px;width:900px;height:15px;background:linear-gradient(#eceef2,#dfe3e8);border-top:1px solid #c5cad1"></div>

<!-- taskbar -->
<div class="a" style="left:0;top:527px;width:900px;height:26px;background:linear-gradient(90deg,#111813 0%,#122016 16.7%,#152619 27.8%,#1a3020 36.7%,#0d3320 41.7%,#1f3322 47.8%,#263223 53.3%,#353c2c 58.9%,#2a3524 64.4%,#16301d 70%,#07301b 77.8%,#06301b 100%)"></div>

<!-- slide -->
<div class="a" style="left:140px;top:137px;width:748px;height:339px;overflow:hidden">
<div class="a" style="left:142px;top:7px;width:469px;height:352px;background:#fff;box-shadow:0 0 3px rgba(40,45,55,.45),1px 1px 3px rgba(40,45,55,.3);overflow:hidden">
  <div class="a" style="left:0;top:0;width:39.6px;height:352px;background:#80ca95"></div>
  <div class="a" style="left:101px;top:0;width:64px;height:39px;background:#80ca95"></div>
  <svg style="left:0;top:0" width="101" height="50" viewBox="0 0 101 50">
    <rect x="0" y="0" width="101" height="50" fill="#c8111b"/>
    <g fill="#f6eaec"><circle cx="97.3" cy="23.7" r="1.51"/><circle cx="97.1" cy="25.9" r="1.44"/><circle cx="96.4" cy="28.1" r="1.34"/><circle cx="95.3" cy="30.3" r="1.34"/><circle cx="93.7" cy="32.3" r="1.15"/><circle cx="91.7" cy="34.4" r="1.10"/><circle cx="89.3" cy="36.3" r="1.46"/><circle cx="86.5" cy="38.0" r="1.51"/><circle cx="83.4" cy="39.7" r="1.56"/><circle cx="79.9" cy="41.2" r="1.38"/><circle cx="76.2" cy="42.5" r="1.11"/><circle cx="72.2" cy="43.6" r="1.43"/><circle cx="68.0" cy="44.6" r="1.42"/><circle cx="63.6" cy="45.3" r="1.26"/><circle cx="59.1" cy="45.9" r="1.34"/><circle cx="54.5" cy="46.2" r="1.15"/><circle cx="49.8" cy="46.3" r="1.29"/><circle cx="45.1" cy="46.2" r="1.18"/><circle cx="40.5" cy="45.9" r="0.94"/><circle cx="36.0" cy="45.3" r="1.14"/><circle cx="31.6" cy="44.6" r="1.13"/><circle cx="27.4" cy="43.6" r="1.59"/><circle cx="23.4" cy="42.5" r="1.24"/><circle cx="19.7" cy="41.2" r="1.16"/><circle cx="16.2" cy="39.7" r="1.07"/><circle cx="13.1" cy="38.0" r="1.06"/><circle cx="10.3" cy="36.3" r="1.14"/><circle cx="7.9" cy="34.4" r="0.99"/><circle cx="5.9" cy="32.3" r="0.91"/><circle cx="4.3" cy="30.3" r="1.51"/><circle cx="3.2" cy="28.1" r="1.22"/><circle cx="2.5" cy="25.9" r="1.21"/><circle cx="2.3" cy="23.7" r="1.30"/><circle cx="2.5" cy="21.5" r="1.11"/><circle cx="3.2" cy="19.3" r="1.02"/><circle cx="4.3" cy="17.1" r="0.95"/><circle cx="5.9" cy="15.1" r="1.11"/><circle cx="7.9" cy="13.0" r="1.12"/><circle cx="10.3" cy="11.1" r="1.41"/><circle cx="13.1" cy="9.4" r="1.29"/><circle cx="16.2" cy="7.7" r="1.56"/><circle cx="19.7" cy="6.2" r="1.14"/><circle cx="23.4" cy="4.9" r="1.54"/><circle cx="27.4" cy="3.8" r="1.31"/><circle cx="31.6" cy="2.8" r="0.96"/><circle cx="36.0" cy="2.1" r="1.03"/><circle cx="40.5" cy="1.5" r="1.31"/><circle cx="45.1" cy="1.2" r="1.59"/><circle cx="49.8" cy="1.1" r="1.15"/><circle cx="54.5" cy="1.2" r="1.44"/><circle cx="59.1" cy="1.5" r="1.20"/><circle cx="63.6" cy="2.1" r="1.51"/><circle cx="68.0" cy="2.8" r="0.95"/><circle cx="72.2" cy="3.8" r="1.24"/><circle cx="76.2" cy="4.9" r="1.53"/><circle cx="79.9" cy="6.2" r="1.09"/><circle cx="83.4" cy="7.7" r="1.08"/><circle cx="86.5" cy="9.4" r="0.92"/><circle cx="89.3" cy="11.1" r="1.02"/><circle cx="91.7" cy="13.0" r="1.09"/><circle cx="93.7" cy="15.1" r="1.39"/><circle cx="95.3" cy="17.1" r="1.05"/><circle cx="96.4" cy="19.3" r="1.18"/><circle cx="97.1" cy="21.5" r="1.04"/></g>
    <path fill-rule="evenodd" fill="#f6eaec" d="M2.3 23.7 A47.5 22.6 0 1 0 97.3 23.7 A47.5 22.6 0 1 0 2.3 23.7 Z M10.3 23.7 A39.5 16.6 0 1 0 89.3 23.7 A39.5 16.6 0 1 0 10.3 23.7 Z"/>
    <g fill="#cf3d48"><circle cx="32.4" cy="7.5" r="0.89"/><circle cx="8.0" cy="25.4" r="0.72"/><circle cx="6.6" cy="24.1" r="0.52"/><circle cx="43.1" cy="3.7" r="0.55"/><circle cx="13.0" cy="10.9" r="0.88"/><circle cx="92.9" cy="27.3" r="0.74"/><circle cx="84.3" cy="14.0" r="0.59"/><circle cx="12.4" cy="14.8" r="0.99"/><circle cx="54.1" cy="3.4" r="0.54"/><circle cx="85.9" cy="34.4" r="0.67"/><circle cx="85.9" cy="15.1" r="0.92"/><circle cx="92.6" cy="22.5" r="0.90"/><circle cx="3.2" cy="22.0" r="0.60"/><circle cx="75.5" cy="6.5" r="0.65"/><circle cx="38.9" cy="41.0" r="0.55"/><circle cx="84.8" cy="13.4" r="0.75"/><circle cx="35.8" cy="41.6" r="1.07"/><circle cx="15.6" cy="8.7" r="0.64"/><circle cx="66.6" cy="3.0" r="1.04"/><circle cx="76.7" cy="41.2" r="0.98"/><circle cx="11.0" cy="30.0" r="0.54"/><circle cx="15.4" cy="12.2" r="0.71"/><circle cx="36.3" cy="6.2" r="1.01"/><circle cx="47.9" cy="4.5" r="0.56"/><circle cx="81.4" cy="8.0" r="0.51"/><circle cx="93.2" cy="25.1" r="0.59"/><circle cx="53.7" cy="1.8" r="0.82"/><circle cx="22.6" cy="38.2" r="1.09"/><circle cx="83.7" cy="38.0" r="0.99"/><circle cx="44.4" cy="44.1" r="1.09"/><circle cx="93.6" cy="17.5" r="0.63"/><circle cx="23.0" cy="9.6" r="0.62"/><circle cx="61.5" cy="42.4" r="1.00"/><circle cx="65.1" cy="42.8" r="0.97"/><circle cx="18.3" cy="37.2" r="0.70"/><circle cx="79.2" cy="7.3" r="1.00"/><circle cx="52.1" cy="43.9" r="0.76"/><circle cx="41.6" cy="6.6" r="1.05"/><circle cx="57.6" cy="42.5" r="0.75"/><circle cx="78.5" cy="8.5" r="0.78"/><circle cx="47.4" cy="44.3" r="0.92"/><circle cx="43.9" cy="3.9" r="0.64"/><circle cx="8.1" cy="31.6" r="0.97"/><circle cx="93.4" cy="19.0" r="0.79"/><circle cx="11.2" cy="12.8" r="0.52"/><circle cx="26.1" cy="7.4" r="1.05"/><circle cx="54.6" cy="43.6" r="0.66"/><circle cx="24.1" cy="5.6" r="0.60"/><circle cx="25.8" cy="8.1" r="0.55"/><circle cx="26.6" cy="4.7" r="0.74"/><circle cx="70.5" cy="41.4" r="0.73"/><circle cx="15.5" cy="34.2" r="0.89"/><circle cx="72.2" cy="38.3" r="0.58"/><circle cx="82.0" cy="37.9" r="1.00"/><circle cx="57.7" cy="42.0" r="0.91"/><circle cx="36.0" cy="5.4" r="1.00"/><circle cx="65.0" cy="3.6" r="0.94"/><circle cx="95.6" cy="23.5" r="0.73"/><circle cx="63.3" cy="4.1" r="0.59"/><circle cx="94.9" cy="21.4" r="0.66"/><circle cx="87.0" cy="33.2" r="0.64"/><circle cx="30.3" cy="7.0" r="0.71"/><circle cx="31.7" cy="39.6" r="0.50"/><circle cx="73.8" cy="39.5" r="0.57"/><circle cx="90.9" cy="33.7" r="1.04"/><circle cx="16.7" cy="10.2" r="1.04"/><circle cx="34.2" cy="4.7" r="0.64"/><circle cx="87.1" cy="35.4" r="0.75"/><circle cx="84.7" cy="10.5" r="0.66"/><circle cx="44.2" cy="44.9" r="1.01"/><circle cx="39.0" cy="43.6" r="1.00"/><circle cx="25.1" cy="5.6" r="0.59"/><circle cx="13.4" cy="12.2" r="0.88"/><circle cx="68.8" cy="5.7" r="0.54"/><circle cx="94.0" cy="30.5" r="1.03"/><circle cx="3.1" cy="23.7" r="0.90"/><circle cx="65.7" cy="43.5" r="0.64"/><circle cx="20.2" cy="37.6" r="0.94"/><circle cx="80.5" cy="11.2" r="0.63"/><circle cx="93.3" cy="23.6" r="0.61"/><circle cx="65.5" cy="44.6" r="0.59"/><circle cx="39.2" cy="42.3" r="1.03"/><circle cx="91.4" cy="15.8" r="0.61"/><circle cx="80.7" cy="38.7" r="0.76"/><circle cx="5.8" cy="22.5" r="0.72"/><circle cx="36.3" cy="42.2" r="0.52"/><circle cx="73.5" cy="42.3" r="0.70"/><circle cx="62.5" cy="44.4" r="0.51"/><circle cx="80.8" cy="36.4" r="0.86"/><circle cx="20.3" cy="12.0" r="0.65"/><circle cx="95.4" cy="27.6" r="1.06"/><circle cx="37.1" cy="40.8" r="0.77"/><circle cx="14.7" cy="10.0" r="0.65"/><circle cx="20.7" cy="37.5" r="0.83"/><circle cx="63.0" cy="4.7" r="0.60"/><circle cx="41.4" cy="40.7" r="1.10"/><circle cx="40.4" cy="41.6" r="0.78"/><circle cx="95.6" cy="22.9" r="0.53"/><circle cx="90.8" cy="18.5" r="1.04"/><circle cx="16.5" cy="37.0" r="0.63"/><circle cx="81.4" cy="9.0" r="0.63"/><circle cx="38.2" cy="6.2" r="0.65"/><circle cx="71.3" cy="42.2" r="0.52"/><circle cx="42.8" cy="4.8" r="0.77"/><circle cx="50.5" cy="2.4" r="0.88"/><circle cx="6.3" cy="23.9" r="0.73"/><circle cx="72.0" cy="38.4" r="0.62"/><circle cx="96.2" cy="23.4" r="1.07"/><circle cx="7.4" cy="16.8" r="0.95"/><circle cx="27.7" cy="38.4" r="0.59"/><circle cx="49.7" cy="43.3" r="0.62"/><circle cx="18.7" cy="8.0" r="1.06"/><circle cx="66.9" cy="42.1" r="0.60"/><circle cx="77.1" cy="5.9" r="0.82"/><circle cx="57.3" cy="41.5" r="0.56"/><circle cx="18.1" cy="35.1" r="0.53"/><circle cx="80.5" cy="12.3" r="0.88"/><circle cx="35.4" cy="5.4" r="0.71"/><circle cx="24.6" cy="7.4" r="0.56"/><circle cx="62.9" cy="41.0" r="0.97"/><circle cx="25.1" cy="42.5" r="0.53"/><circle cx="54.4" cy="44.3" r="0.59"/><circle cx="79.9" cy="8.6" r="0.69"/><circle cx="87.3" cy="36.9" r="0.93"/><circle cx="68.4" cy="39.8" r="0.93"/><circle cx="22.0" cy="41.4" r="0.51"/><circle cx="86.4" cy="15.8" r="0.64"/><circle cx="89.0" cy="29.8" r="0.92"/><circle cx="68.7" cy="40.4" r="0.76"/><circle cx="61.4" cy="4.1" r="1.05"/><circle cx="34.5" cy="7.1" r="0.52"/><circle cx="80.3" cy="38.6" r="1.03"/><circle cx="83.2" cy="38.3" r="0.88"/><circle cx="28.9" cy="5.1" r="0.56"/><circle cx="74.5" cy="10.0" r="0.69"/><circle cx="22.0" cy="40.6" r="0.55"/><circle cx="80.5" cy="8.4" r="0.50"/><circle cx="20.6" cy="35.9" r="1.09"/><circle cx="11.7" cy="30.1" r="0.55"/><circle cx="39.3" cy="41.9" r="0.55"/><circle cx="37.8" cy="41.6" r="0.64"/><circle cx="32.7" cy="7.7" r="1.01"/><circle cx="86.9" cy="11.6" r="0.61"/><circle cx="16.1" cy="12.0" r="0.70"/><circle cx="10.9" cy="18.4" r="1.09"/><circle cx="62.9" cy="5.5" r="0.62"/><circle cx="71.1" cy="41.4" r="0.96"/><circle cx="68.9" cy="40.1" r="0.91"/><circle cx="66.5" cy="43.8" r="0.61"/><circle cx="51.4" cy="5.2" r="0.84"/><circle cx="40.8" cy="44.6" r="0.63"/><circle cx="75.0" cy="6.2" r="1.09"/><circle cx="35.5" cy="3.1" r="0.66"/><circle cx="21.6" cy="6.5" r="0.97"/><circle cx="80.4" cy="38.5" r="0.78"/><circle cx="35.4" cy="40.1" r="0.66"/><circle cx="34.6" cy="7.6" r="1.04"/><circle cx="77.8" cy="8.3" r="1.03"/><circle cx="65.8" cy="42.1" r="0.97"/><circle cx="82.4" cy="9.7" r="0.92"/><circle cx="43.5" cy="41.5" r="0.83"/><circle cx="6.7" cy="22.2" r="0.59"/><circle cx="65.5" cy="39.6" r="0.72"/><circle cx="41.6" cy="45.2" r="0.55"/><circle cx="67.2" cy="43.8" r="0.70"/><circle cx="96.2" cy="24.2" r="0.79"/><circle cx="33.8" cy="40.6" r="0.72"/><circle cx="75.7" cy="10.3" r="0.76"/><circle cx="50.1" cy="45.8" r="0.89"/><circle cx="71.1" cy="41.7" r="0.83"/><circle cx="90.4" cy="28.8" r="0.89"/><circle cx="89.7" cy="31.0" r="0.72"/><circle cx="80.8" cy="37.1" r="0.84"/><circle cx="56.0" cy="2.3" r="0.57"/><circle cx="90.1" cy="21.3" r="0.51"/><circle cx="10.9" cy="30.5" r="0.63"/><circle cx="72.2" cy="9.2" r="0.53"/><circle cx="84.0" cy="34.4" r="0.55"/><circle cx="45.7" cy="43.9" r="0.65"/><circle cx="8.7" cy="15.0" r="0.94"/><circle cx="48.2" cy="3.3" r="0.72"/><circle cx="66.7" cy="7.2" r="0.98"/><circle cx="69.2" cy="39.0" r="0.70"/><circle cx="81.8" cy="38.2" r="1.02"/><circle cx="83.6" cy="38.0" r="0.91"/><circle cx="89.6" cy="16.6" r="0.55"/><circle cx="57.2" cy="42.2" r="1.03"/><circle cx="19.7" cy="8.9" r="0.92"/><circle cx="11.3" cy="29.9" r="0.97"/><circle cx="42.3" cy="44.5" r="0.96"/><circle cx="20.5" cy="8.9" r="0.55"/><circle cx="5.9" cy="26.4" r="1.02"/><circle cx="45.5" cy="44.5" r="1.05"/><circle cx="7.2" cy="28.3" r="0.74"/><circle cx="63.1" cy="45.0" r="0.90"/><circle cx="35.1" cy="42.5" r="1.04"/><circle cx="11.2" cy="15.6" r="0.65"/><circle cx="17.4" cy="11.6" r="0.59"/><circle cx="61.9" cy="7.1" r="0.63"/><circle cx="85.5" cy="12.9" r="0.75"/><circle cx="16.1" cy="13.1" r="1.00"/><circle cx="87.8" cy="31.6" r="0.63"/><circle cx="26.0" cy="9.9" r="0.72"/><circle cx="29.1" cy="42.2" r="0.53"/><circle cx="18.5" cy="36.3" r="0.93"/><circle cx="9.5" cy="28.8" r="0.80"/><circle cx="85.6" cy="12.9" r="0.61"/><circle cx="51.0" cy="6.1" r="0.93"/><circle cx="93.5" cy="23.5" r="0.81"/><circle cx="22.7" cy="9.0" r="0.56"/><circle cx="25.3" cy="38.5" r="0.52"/><circle cx="10.4" cy="33.0" r="0.62"/><circle cx="69.2" cy="5.3" r="1.02"/><circle cx="16.9" cy="38.9" r="1.06"/><circle cx="39.4" cy="44.3" r="0.97"/><circle cx="51.2" cy="45.0" r="1.06"/><circle cx="52.5" cy="3.7" r="0.76"/><circle cx="50.0" cy="1.5" r="0.58"/><circle cx="91.9" cy="29.9" r="0.99"/><circle cx="90.7" cy="29.4" r="0.65"/><circle cx="93.7" cy="24.4" r="0.66"/><circle cx="13.7" cy="14.2" r="0.74"/><circle cx="9.5" cy="25.9" r="1.00"/><circle cx="35.2" cy="40.6" r="0.64"/><circle cx="7.0" cy="18.5" r="0.76"/><circle cx="72.3" cy="5.6" r="0.64"/><circle cx="49.3" cy="45.3" r="0.84"/><circle cx="30.5" cy="7.2" r="0.85"/><circle cx="57.4" cy="4.6" r="1.05"/><circle cx="32.4" cy="39.7" r="1.00"/><circle cx="42.4" cy="42.8" r="0.51"/><circle cx="5.6" cy="26.8" r="0.80"/><circle cx="35.1" cy="44.6" r="0.91"/><circle cx="51.9" cy="5.1" r="0.72"/><circle cx="56.7" cy="41.4" r="1.08"/><circle cx="80.1" cy="8.4" r="0.69"/><circle cx="50.7" cy="5.6" r="1.04"/><circle cx="5.1" cy="19.6" r="0.97"/><circle cx="74.7" cy="5.5" r="0.56"/><circle cx="26.9" cy="5.1" r="1.04"/><circle cx="57.5" cy="45.1" r="0.76"/><circle cx="94.1" cy="23.5" r="1.07"/><circle cx="31.0" cy="41.2" r="0.79"/><circle cx="24.8" cy="9.4" r="0.67"/><circle cx="16.1" cy="33.3" r="0.56"/><circle cx="27.2" cy="39.3" r="0.58"/><circle cx="79.1" cy="7.9" r="0.71"/><circle cx="93.2" cy="24.0" r="0.64"/><circle cx="44.9" cy="6.6" r="0.92"/><circle cx="26.3" cy="42.3" r="0.85"/><circle cx="38.8" cy="4.5" r="0.61"/><circle cx="65.3" cy="5.6" r="0.84"/><circle cx="13.2" cy="33.8" r="0.67"/><circle cx="40.1" cy="42.8" r="0.96"/><circle cx="13.8" cy="13.4" r="0.52"/><circle cx="25.1" cy="39.9" r="0.71"/><circle cx="16.7" cy="9.7" r="0.68"/><circle cx="37.9" cy="2.3" r="0.69"/><circle cx="81.9" cy="36.6" r="0.67"/><circle cx="59.9" cy="2.7" r="0.65"/><circle cx="73.5" cy="39.0" r="0.67"/><circle cx="42.1" cy="43.8" r="0.91"/><circle cx="72.6" cy="39.1" r="0.88"/><circle cx="44.9" cy="3.0" r="0.92"/><circle cx="6.8" cy="17.1" r="0.75"/><circle cx="14.2" cy="33.4" r="0.90"/><circle cx="91.8" cy="16.8" r="0.68"/><circle cx="74.8" cy="8.4" r="0.90"/><circle cx="75.3" cy="39.1" r="0.57"/><circle cx="12.0" cy="15.6" r="0.78"/><circle cx="9.1" cy="33.8" r="1.09"/><circle cx="55.7" cy="5.6" r="0.79"/><circle cx="90.2" cy="30.5" r="0.88"/><circle cx="91.7" cy="30.8" r="0.65"/><circle cx="24.9" cy="6.9" r="0.52"/><circle cx="76.1" cy="39.5" r="0.68"/><circle cx="17.3" cy="37.0" r="1.00"/><circle cx="18.9" cy="38.9" r="0.69"/><circle cx="57.4" cy="4.2" r="0.91"/><circle cx="4.9" cy="20.9" r="0.61"/><circle cx="94.3" cy="29.3" r="0.99"/><circle cx="6.8" cy="32.0" r="0.87"/><circle cx="93.4" cy="22.9" r="0.89"/><circle cx="44.4" cy="4.5" r="0.90"/><circle cx="25.6" cy="4.9" r="0.82"/><circle cx="56.6" cy="5.8" r="0.81"/><circle cx="58.1" cy="4.2" r="0.74"/><circle cx="8.1" cy="20.9" r="1.02"/><circle cx="74.4" cy="5.8" r="1.09"/><circle cx="71.0" cy="5.2" r="1.00"/><circle cx="94.1" cy="26.7" r="0.96"/><circle cx="14.3" cy="36.6" r="0.53"/><circle cx="17.3" cy="35.2" r="0.70"/><circle cx="5.2" cy="28.6" r="0.56"/><circle cx="37.9" cy="7.2" r="1.03"/><circle cx="85.7" cy="37.7" r="0.52"/><circle cx="18.7" cy="38.6" r="0.91"/><circle cx="39.2" cy="41.1" r="0.87"/><circle cx="8.4" cy="15.8" r="0.63"/><circle cx="4.3" cy="26.6" r="0.96"/></g>
    <ellipse cx="49.8" cy="23.7" rx="39.3" ry="16.4" fill="none" stroke="#f6eaec" stroke-width="0.8"/>
    <path d="M1.5 17 L9 14.5 L12.5 22 L5 28 Z M98.5 17 L91 14.5 L87.5 22 L95 28 Z" fill="#fbf3f4"/>
    <path d="M4 18.5 L8.5 17 L10.5 21.5 L6 25 Z M96 18.5 L91.5 17 L89.5 21.5 L94 25 Z" fill="#e9c4c8"/>
    <rect x="27" y="17.3" width="44.6" height="16" fill="#fbeff1"/>
    <rect x="38" y="13.8" width="21.2" height="4" fill="#fbeff1"/>
    <rect x="26.5" y="17" width="45.6" height="1" fill="#eab4b9"/>
    <g fill="#b8323d">
      <rect x="29.3" y="20" width="1.7" height="5"/><rect x="32.8" y="20" width="1.7" height="5"/>
      <rect x="40.5" y="20" width="1.7" height="5"/><rect x="44.5" y="20" width="1.7" height="5"/><rect x="48.5" y="20" width="1.7" height="5"/><rect x="52.5" y="20" width="1.7" height="5"/><rect x="56.5" y="20" width="1.7" height="5"/>
      <rect x="64.3" y="20" width="1.7" height="5"/><rect x="67.8" y="20" width="1.7" height="5"/>
      <rect x="29.3" y="27" width="1.7" height="4.5"/><rect x="32.8" y="27" width="1.7" height="4.5"/>
      <rect x="40.5" y="27" width="1.7" height="4.5"/><rect x="44.5" y="27" width="1.7" height="4.5"/><rect x="48.3" y="27.5" width="2.2" height="5.8"/><rect x="52.5" y="27" width="1.7" height="4.5"/><rect x="56.5" y="27" width="1.7" height="4.5"/>
      <rect x="64.3" y="27" width="1.7" height="4.5"/><rect x="67.8" y="27" width="1.7" height="4.5"/>
    </g>
    <path d="M3.5 34.5 Q8 38 13 34 Q17 31 21 32.5 Q24 33.5 27 30.5" fill="none" stroke="#f2d21a" stroke-width="2.4"/>
    <path d="M3.5 32 Q8 35.5 13 31.5 Q17 28.5 21 30 Q24 31 26.5 27" fill="none" stroke="#2f86d6" stroke-width="2"/>
    <path d="M97 34.5 Q92.5 38 87.5 34 Q83.5 31 79.5 32.5 Q76.5 33.5 72 30.5" fill="none" stroke="#f2d21a" stroke-width="2.4"/>
    <path d="M97 32 Q92.5 35.5 87.5 31.5 Q83.5 28.5 79.5 30 Q76.5 31 72.5 27" fill="none" stroke="#2f86d6" stroke-width="2"/>
    <rect x="45.5" y="36.5" width="9" height="1" fill="#e8a5aa"/>
  </svg>
  <div class="a" style="left:39.6px;top:49px;width:7px;height:7px;background:radial-gradient(circle at 100% 100%,#fff 6.5px,#80ca95 7px)"></div>
  <div class="a" style="left:12px;top:82px;width:379px;height:16px;background:#008580;border-radius:8px 0 0 8px"></div>
  <div class="a" style="left:44px;top:113px;width:8px;height:8px;border-radius:50%;background:#0f2e66"></div>
</div></div>
<!-- body lines -->
<div class="a" id="body" style="left:341.6px;top:1px;width:386px;font-size:18.2px;line-height:1;color:#0f3675;-webkit-text-stroke:0.15px #0f3675">
<div class="jl" style="top:250.1px"><b style="color:#b5151b;-webkit-text-stroke:0.2px #b5151b">Катерина Хрипун</b> – здобувачка освіти</div>
<div class="jl" style="top:272.0px">першого кваліфікаційного рівня (3 курс)</div>
<div class="jl" style="top:293.9px">спеціальності «Початкова освіта. Українська</div>
<div class="jl" style="top:315.8px">мова і література» навчально-наукового</div>
<div class="jl" style="top:337.7px">інституту педагогіки та психології ДЗ</div>
<div class="jl" style="top:359.6px">«Луганський національний університет імені</div>
<div class="jl last" style="top:381.5px;letter-spacing:0.06px">Тараса Шевченка» (м.Старобільськ)</div>
</div>

<!-- quick access -->
<svg style="left:0;top:47px" width="90" height="16" viewBox="0 0 90 16">
  <rect x="1.5" y="2.5" width="9.5" height="10" fill="#fff6f0" stroke="#e8743f" stroke-width="1"/>
  <text x="2.6" y="11.3" font-family="Liberation Sans" font-weight="bold" font-size="9.5" fill="#dd4a1a">P</text>
  <rect x="8" y="10" width="1.5" height="1.5" fill="#e8743f"/>
  <rect x="14" y="4" width="1" height="8" fill="#c9c9c9"/>
  <rect x="19" y="3" width="9.5" height="9" rx="1" fill="#3b52b4"/>
  <rect x="21" y="3" width="5.5" height="3.5" fill="#e8ecf6"/>
  <rect x="21.5" y="8.5" width="5" height="3.5" fill="#1d2a63"/>
  <rect x="23" y="9.5" width="2" height="2" fill="#c9d3ee"/>
  <path d="M36 7 Q38.5 3.5 41 5.5 Q42.8 7.5 40.5 10.5" fill="none" stroke="#a0a0a0" stroke-width="1.5"/>
  <path d="M34.5 3.5 L35 7.8 L38.8 6.8 Z" fill="#a0a0a0"/>
  <path d="M46 7 L49 7 L47.5 8.8 Z" fill="#a8a8a8"/>
  <path d="M60.5 4.8 A3.4 3.4 0 1 0 63.6 6.6" fill="none" stroke="#a8a8a8" stroke-width="1.5"/>
  <path d="M61 3.3 L64 3.6 L63.5 6.6 Z" fill="#a8a8a8"/>
  <rect x="69" y="4" width="1" height="8" fill="#c9c9c9"/>
  <rect x="72.8" y="5.8" width="4.2" height="0.9" fill="#222"/>
  <path d="M72.6 7.6 L77.2 7.6 L74.9 10.2 Z" fill="#222"/>
</svg>
<!-- window controls -->
<svg style="left:810px;top:47px" width="90" height="36" viewBox="0 0 90 36">
  <rect x="10" y="9" width="7" height="1.2" fill="#555"/>
  <rect x="40.5" y="7.5" width="5.5" height="5.5" fill="none" stroke="#444" stroke-width="1"/>
  <path d="M42 7.5 V6 H47.5 V11.5 H46" fill="none" stroke="#444" stroke-width="1"/>
  <path d="M70 6 L77.5 13.5 M77.5 6 L70 13.5" stroke="#333" stroke-width="1.1"/>
  <path d="M65.5 26 L68.5 23 L71.5 26" fill="none" stroke="#555" stroke-width="1.3"/>
  <path d="M65.5 26.5 H71.5" stroke="#888" stroke-width="1"/>
  <circle cx="83" cy="24.2" r="5.4" fill="#1f7bd8"/>
  <circle cx="83" cy="24.2" r="5.4" fill="none" stroke="#1661b3" stroke-width="0.6"/>
  <text x="80.2" y="27.6" font-family="Liberation Sans" font-weight="bold" font-size="8.5" fill="#fff">?</text>
</svg>

<!-- ribbon icons -->
<svg style="left:0;top:79px" width="600" height="30" viewBox="0 79 600 30">
  <defs>
    <linearGradient id="scr" x1="0" y1="0" x2="0" y2="1"><stop offset="0" stop-color="#fbfbfc"/><stop offset="1" stop-color="#e4e7ea"/></linearGradient>
    <linearGradient id="bar" x1="0" y1="0" x2="0" y2="1"><stop offset="0" stop-color="#7d8c9c"/><stop offset="1" stop-color="#4b5968"/></linearGradient>
    <radialGradient id="globe" cx="0.35" cy="0.35" r="0.7"><stop offset="0" stop-color="#6fd0ff"/><stop offset="0.6" stop-color="#1a6fc4"/><stop offset="1" stop-color="#0c3d80"/></radialGradient>
    <radialGradient id="clk" cx="0.4" cy="0.35" r="0.7"><stop offset="0" stop-color="#ffffff"/><stop offset="0.7" stop-color="#e9ecef"/><stop offset="1" stop-color="#a9b0b8"/></radialGradient>
    <linearGradient id="blu" x1="0" y1="0" x2="1" y2="1"><stop offset="0" stop-color="#3d9be0"/><stop offset="1" stop-color="#7cc6f2"/></linearGradient>
  </defs>
  <!-- icon 1: from beginning -->
  <rect x="7.8" y="85.5" width="16" height="10" fill="url(#scr)" stroke="#98a4b1" stroke-width="0.9"/>
  <rect x="10" y="88" width="9" height="1" fill="#c5cad0"/><rect x="10" y="90" width="7" height="3.5" fill="#d8dce0"/>
  <rect x="5.8" y="83.5" width="20.2" height="2.3" rx="0.8" fill="url(#bar)"/>
  <rect x="15.4" y="95.5" width="2.2" height="5" fill="#6a7887"/>
  <rect x="10.5" y="100.2" width="11" height="2.3" rx="1" fill="#7d8b99"/>
  <circle cx="20.6" cy="93.2" r="5.2" fill="#fff" stroke="#9aa4ad" stroke-width="0.9"/>
  <path d="M18.8 90.2 L23.2 93.2 L18.8 96.2 Z" fill="#1eaa2a"/>
  <!-- icon 2: current -->
  <rect x="43.2" y="85.5" width="16.7" height="10" fill="url(#scr)" stroke="#98a4b1" stroke-width="0.9"/>
  <rect x="41.6" y="83.5" width="19.4" height="2.3" rx="0.8" fill="url(#bar)"/>
  <circle cx="48.6" cy="90" r="3.4" fill="#2a6fd0"/>
  <path d="M48.6 90 L48.6 86.6 A3.4 3.4 0 0 1 51.9 89.2 Z" fill="#2faa3a"/>
  <path d="M48.6 90 L51.9 89.2 A3.4 3.4 0 0 1 51 92.4 Z" fill="#e2403a"/>
  <rect x="53" y="88" width="5" height="4" fill="#dfe2e6"/>
  <rect x="50.4" y="95.5" width="2.2" height="5" fill="#6a7887"/>
  <rect x="45.5" y="100.2" width="11" height="2.3" rx="1" fill="#7d8b99"/>
  <!-- icon 3: broadcast -->
  <rect x="110" y="85.5" width="17" height="9.5" fill="url(#scr)" stroke="#98a4b1" stroke-width="0.9"/>
  <rect x="108.6" y="83.8" width="20.1" height="2.1" rx="0.8" fill="url(#bar)"/>
  <rect x="112" y="88" width="8" height="4" fill="#dadde1"/>
  <rect x="117.4" y="95" width="2.2" height="6" fill="#6a7887"/>
  <rect x="112.8" y="100.4" width="11" height="2.2" rx="1" fill="#7d8b99"/>
  <circle cx="123.8" cy="92.8" r="5.4" fill="url(#globe)"/>
  <path d="M120 90 Q122 88 124 89.5 Q125 92 122.5 93 Q121 95 119.5 93.5 Z M125 94 Q127.5 93 128.5 95 Q127 97.5 124.5 97.5 Z" fill="#2fae3f"/>
  <!-- icon 4: custom -->
  <rect x="177" y="83" width="8.6" height="16.6" fill="#fbfcfd" stroke="#a2acb6" stroke-width="0.8"/>
  <rect x="178.5" y="85" width="5.5" height="2.5" fill="#4a90d9"/>
  <rect x="178.5" y="89.5" width="5.5" height="2.5" fill="#c7d6e6"/>
  <rect x="178.5" y="94" width="5.5" height="2.5" fill="#4a90d9"/>
  <rect x="183" y="90" width="13" height="7.5" fill="url(#scr)" stroke="#98a4b1" stroke-width="0.9"/>
  <rect x="181.3" y="88.3" width="15.9" height="2" rx="0.8" fill="url(#bar)"/>
  <rect x="188.3" y="97.5" width="2" height="3.5" fill="#6a7887"/>
  <rect x="184.4" y="100.5" width="8.6" height="2" rx="1" fill="#7d8b99"/>
  <!-- icon 5: setup show -->
  <path d="M238.4 83.1 H248.5 L252.2 86.8 V100.4 H238.4 Z" fill="#fbfcfd" stroke="#a8b0b9" stroke-width="0.8"/>
  <path d="M248.5 83.1 V86.8 H252.2" fill="#dfe4ea" stroke="#a8b0b9" stroke-width="0.6"/>
  <rect x="240" y="89" width="1.5" height="1.2" fill="#555"/><rect x="240" y="92.3" width="1.5" height="1.2" fill="#8a96a3"/><rect x="240" y="95.6" width="1.5" height="1.2" fill="#8a96a3"/>
  <rect x="246" y="89.5" width="10.5" height="7.5" fill="url(#scr)" stroke="#98a4b1" stroke-width="0.9"/>
  <rect x="244.7" y="88.3" width="13.7" height="2" rx="0.8" fill="url(#bar)"/>
  <circle cx="249.3" cy="93.3" r="2.4" fill="#2a6fd0"/>
  <path d="M249.3 93.3 V90.9 A2.4 2.4 0 0 1 251.7 93.3 Z" fill="#2faa3a"/>
  <path d="M249.3 93.3 H251.7 A2.4 2.4 0 0 1 250.5 95.4 Z" fill="#e2403a"/>
  <rect x="250.2" y="97" width="2" height="3.5" fill="#6a7887"/>
  <rect x="246.8" y="100.2" width="8.5" height="1.8" rx="0.8" fill="#7d8b99"/>
  <!-- icon 6: hide slide -->
  <rect x="280.7" y="85.3" width="20.4" height="15.6" rx="1.5" fill="#d5dae0" stroke="#a9b1ba" stroke-width="0.8"/>
  <rect x="282.5" y="87" width="17" height="11.5" fill="#fbfcfd"/>
  <path d="M286 89.5 A3.6 3.6 0 1 0 289.8 93.7 L286 93 Z" fill="#2a6fd0"/>
  <path d="M286.5 89.2 A3.6 3.6 0 0 1 290 92.8 L286.5 92.5 Z" fill="#2faa3a"/>
  <path d="M287 93.5 L290 93.8 L289 96 Z" fill="#e2403a"/>
  <path d="M283 87.5 L299 98.5" stroke="#8a94a0" stroke-width="0.9"/>
  <!-- icon 7: rehearse timings -->
  <rect x="321.2" y="83.1" width="20.5" height="16.5" fill="#f4f6f8" stroke="#a6aeb7" stroke-width="0.9"/>
  <rect x="323.8" y="85.7" width="15.2" height="9" fill="url(#blu)"/>
  <circle cx="327.4" cy="96" r="5.6" fill="url(#clk)" stroke="#8e969f" stroke-width="0.7"/>
  <path d="M327.4 92.6 V96 H330" fill="none" stroke="#333" stroke-width="0.9"/>
  <!-- icon 8: record -->
  <path d="M372.8 89.8 L377.5 93.5 L372.8 97.3 Z" fill="#1e6fd0"/>
  <circle cx="381.3" cy="93.5" r="5.6" fill="url(#clk)" stroke="#8e969f" stroke-width="0.7"/>
  <rect x="380.3" y="86" width="2" height="2" fill="#666"/>
  <path d="M381.3 90.3 V93.7 H383.8" fill="none" stroke="#333" stroke-width="0.9"/>
</svg>
<!-- dropdown arrows under labels -->
<svg style="left:0;top:79px" width="900" height="60" viewBox="0 79 900 60">
  <path d="M197.5 118.5 L201 118.5 L199.25 120.5 Z" fill="#555"/>
  <path d="M394 118.5 L397.5 118.5 L395.75 120.5 Z" fill="#555"/>
  <!-- checkboxes -->
  <g fill="#f4f5f7" stroke="#a3a8ae" stroke-width="0.8">
    <rect x="408.8" y="84" width="7.7" height="7.7"/>
    <rect x="408.8" y="98.5" width="7.7" height="7.7"/>
    <rect x="408.8" y="112.8" width="7.7" height="7.7"/>
    <rect x="606.6" y="112.8" width="7.8" height="7.8"/>
  </g>
  <g fill="none" stroke="#4a4a4a" stroke-width="1">
    <path d="M410.3 88 L412.2 90.2 L415.2 85.3"/>
    <path d="M410.3 102.5 L412.2 104.7 L415.2 99.8"/>
    <path d="M410.3 116.8 L412.2 119 L415.2 114.1"/>
  </g>
  <!-- monitor icons -->
  <rect x="606.3" y="84.6" width="10.2" height="7" rx="0.8" fill="#c9d9ea" stroke="#7393b8" stroke-width="0.7"/>
  <rect x="607.3" y="86.6" width="6.2" height="4.2" fill="#2366b8"/>
  <rect x="614" y="86.2" width="1.8" height="4.6" fill="#1a4f92"/>
  <rect x="607.3" y="85.3" width="8.5" height="0.9" fill="#9fb8d4"/>
  <rect x="606.3" y="99" width="8" height="6" fill="#dcdcdc" stroke="#c4c4c4" stroke-width="0.6"/>
  <rect x="609" y="98" width="8" height="6" fill="#e3e3e3" stroke="#c4c4c4" stroke-width="0.6"/>
  <!-- dropdowns -->
  <rect x="666.6" y="82" width="96.4" height="12.8" fill="#fff" stroke="#d6dbe1" stroke-width="0.9"/>
  <rect x="666.6" y="96.4" width="96.4" height="12.8" fill="#f7f8fa" stroke="#e1e5ea" stroke-width="0.9"/>
  <path d="M757 88 L760.5 88 L758.75 90 Z" fill="#444"/>
  <path d="M757 102.3 L760.5 102.3 L758.75 104.3 Z" fill="#777"/>
</svg>
<!-- bottom UI -->
<svg style="left:0;top:130px" width="900" height="430" viewBox="0 130 900 430">
  <defs>
    <linearGradient id="yel" x1="0" y1="0" x2="0" y2="1"><stop offset="0" stop-color="#fde38a"/><stop offset="1" stop-color="#fbc93d"/></linearGradient>
  </defs>
  <!-- left panel close x -->
  <path d="M130.5 142.3 L135.5 147.3 M135.5 142.3 L130.5 147.3" stroke="#4a4a4a" stroke-width="1.3"/>
  <!-- left panel scroll arrows -->
  <path d="M131 159.5 L136.8 159.5 L133.9 156.3 Z" fill="#333"/>
  <path d="M131 504.8 L136.8 504.8 L133.9 508 Z" fill="#555"/>
  <!-- left scroll thumb -->
  <rect x="129.6" y="382" width="9.2" height="31" rx="1" fill="#f4f6f8" stroke="#aeb4bb" stroke-width="0.8"/>
  <rect x="132.2" y="395" width="4" height="5" fill="#c3c8ce"/>
  <!-- main scrollbar arrows -->
  <path d="M891.5 146.5 L897.5 146.5 L894.5 142.8 Z" fill="#333"/>
  <rect x="889" y="346.3" width="10.2" height="11.2" fill="#f5f7f9" stroke="#8e959d" stroke-width="1"/>
  <rect x="891.5" y="348.5" width="5.5" height="7" fill="#c9cdd2"/>
  <path d="M891.8 436.5 L897.2 436.5 L894.5 439.8 Z" fill="#555"/>
  <rect x="889" y="443.5" width="11" height="1" fill="#cfd4da"/>
  <path d="M891.8 449.5 L897.2 449.5 L894.5 446.5 Z M891.8 453.2 L897.2 453.2 L894.5 450.2 Z" fill="#222"/>
  <path d="M891.8 457.5 L897.2 457.5 L894.5 460.5 Z M891.8 461.2 L897.2 461.2 L894.5 464.2 Z" fill="#222"/>
  <!-- notes scrollbar arrows -->
  <path d="M891.8 487.5 L897.2 487.5 L894.5 484.3 Z" fill="#9aa3ad"/>
  <path d="M891.8 504.8 L897.2 504.8 L894.5 508 Z" fill="#9aa3ad"/>
  <!-- status bar separators -->
  <rect x="63" y="514" width="1" height="11" fill="#c3c8ce"/>
  <rect x="108.8" y="514" width="1" height="11" fill="#c3c8ce"/>
  <rect x="148" y="514" width="1" height="11" fill="#c3c8ce"/>
  <rect x="716.4" y="514" width="1" height="11" fill="#c3c8ce"/>
  <!-- view buttons -->
  <rect x="719.3" y="514.2" width="12.7" height="11.4" rx="1" fill="url(#yel)" stroke="#f0b33a" stroke-width="0.8"/>
  <rect x="722" y="516.6" width="7.5" height="6.8" fill="#fff" stroke="#333" stroke-width="1"/>
  <rect x="725.5" y="516.6" width="1" height="6.8" fill="#333"/>
  <rect x="726.2" y="518.5" width="3" height="1.2" fill="#333"/>
  <g fill="none" stroke="#555" stroke-width="0.9">
    <rect x="734.6" y="516.3" width="3" height="2.6"/><rect x="738.7" y="516.3" width="3" height="2.6"/>
    <rect x="734.6" y="520.5" width="3" height="2.6"/><rect x="738.7" y="520.5" width="3" height="2.6"/>
    <path d="M746.3 516.5 Q748.2 515.5 750 516.8 Q751.8 515.5 753.7 516.5 V523.5 Q751.8 522.5 750 523.5 Q748.2 522.5 746.3 523.5 Z M750 516.8 V523.5" stroke="#777"/>
  </g>
  <rect x="759" y="516" width="7.5" height="4.5" fill="#fff" stroke="#555" stroke-width="0.9"/>
  <rect x="758.5" y="515.5" width="8.5" height="1.2" fill="#444"/>
  <path d="M762.75 520.5 V524 M760.5 524.2 H765" stroke="#555" stroke-width="1"/>
  <!-- zoom slider -->
  <circle cx="799" cy="519.5" r="4.6" fill="#fafbfc" stroke="#8d949c" stroke-width="0.9"/>
  <rect x="796.5" y="519" width="5" height="1.1" fill="#333"/>
  <rect x="805" y="519.2" width="65" height="0.9" fill="#aab0b7"/>
  <rect x="836.5" y="516.5" width="0.9" height="6" fill="#aab0b7"/>
  <path d="M826.8 515.3 H831.6 V521.5 L829.2 524 L826.8 521.5 Z" fill="#fafbfc" stroke="#7e868f" stroke-width="0.8"/>
  <circle cx="875.6" cy="519.5" r="4.6" fill="#fafbfc" stroke="#8d949c" stroke-width="0.9"/>
  <path d="M873.1 519.5 H878.1 M875.6 517 V522" stroke="#333" stroke-width="1.1"/>
  <rect x="886" y="513.8" width="10.7" height="11" rx="1" fill="#e2e5e9" stroke="#8a9199" stroke-width="0.8"/>
  <path d="M888 516 L890 518 M894.7 516 L892.7 518 M888 522.8 L890 520.8 M894.7 522.8 L892.7 520.8" stroke="#555" stroke-width="0.9"/>
  <rect x="896.6" y="527" width="0.9" height="26" fill="#9a9a9a"/>
</svg>
<!-- taskbar icons -->
<svg style="left:0;top:527px" width="900" height="26" viewBox="0 527 900 26">
  <defs>
    <linearGradient id="edge1" x1="0" y1="0" x2="1" y2="1"><stop offset="0" stop-color="#3ccf8e"/><stop offset="0.5" stop-color="#1e9ad6"/><stop offset="1" stop-color="#1562b8"/></linearGradient>
    <linearGradient id="edge2" x1="0" y1="0" x2="1" y2="0"><stop offset="0" stop-color="#0f54a8"/><stop offset="1" stop-color="#2fb5e8"/></linearGradient>
    <linearGradient id="fold" x1="0" y1="0" x2="0" y2="1"><stop offset="0" stop-color="#ffd35c"/><stop offset="1" stop-color="#f2b834"/></linearGradient>
    <linearGradient id="mail" x1="0" y1="0" x2="0" y2="1"><stop offset="0" stop-color="#1a8ee0"/><stop offset="1" stop-color="#2aa6f0"/></linearGradient>
    <linearGradient id="ppt" x1="0" y1="0" x2="1" y2="1"><stop offset="0" stop-color="#f88a4a"/><stop offset="1" stop-color="#e1501c"/></linearGradient>
  </defs>
  <!-- windows -->
  <path d="M10 536 L15 535.3 V540 H10 Z M16 535.2 L21 534.5 V540 H16 Z M10 541 H15 V545.7 L10 545 Z M16 541 H21 V546.4 L16 545.8 Z" fill="#f2f2f2"/>
  <!-- task view -->
  <g fill="none" stroke="#d8d8d8" stroke-width="1.1">
    <rect x="43.5" y="537" width="6" height="6"/>
    <path d="M42 535.5 H51 M42 544.5 H51"/>
  </g>
  <rect x="52" y="535.5" width="1.2" height="1.5" fill="#e0e0e0"/><rect x="52" y="538.5" width="1.2" height="6" fill="#e0e0e0"/>
  <!-- edge -->
  <circle cx="81" cy="540.5" r="7.8" fill="url(#edge1)"/>
  <path d="M74 541 Q75 547.5 81.5 548.2 Q86 548 88.3 544 Q84 546.5 80 544.5 Q77 542.5 78.5 539.5 Q80.5 537.5 83.5 538.5 Q86.5 539.5 86 542 Q89 541 88.5 538 Q87 533.5 81 533 Q75 533.5 74 541 Z" fill="url(#edge2)"/>
  <circle cx="82.5" cy="541.2" r="2.3" fill="#0f1c12"/>
  <!-- explorer -->
  <path d="M106.1 535 H111 L112.5 536.3 H120 V545.9 H106.1 Z" fill="url(#fold)"/>
  <rect x="106.1" y="537" width="13.9" height="1" fill="#f6c94a"/>
  <path d="M108.5 541 H117.5 V545.9 H115.3 V543.5 H110.7 V545.9 H108.5 Z" fill="#2d8fe0"/>
  <rect x="100" y="551.8" width="26.7" height="1.4" fill="#77b8ec"/>
  <!-- store -->
  <path d="M141.5 535.5 V533.8 H149 V535.5" fill="none" stroke="#34a2e8" stroke-width="1"/>
  <rect x="137.8" y="535.5" width="15" height="12" rx="1.5" fill="#f6f6f6"/>
  <rect x="142.2" y="538.2" width="2.7" height="2.7" fill="#f25022"/><rect x="145.6" y="538.2" width="2.7" height="2.7" fill="#7fba00"/>
  <rect x="142.2" y="541.6" width="2.7" height="2.7" fill="#00a4ef"/><rect x="145.6" y="541.6" width="2.7" height="2.7" fill="#ffb900"/>
  <!-- mail -->
  <path d="M169.4 537.8 L177.7 532.6 L186.1 537.8 V547.6 H169.4 Z" fill="url(#mail)"/>
  <path d="M170.5 537.8 H185 L177.7 542.8 Z" fill="#f2f7fc"/>
  <!-- opera -->
  <ellipse cx="210.2" cy="539.6" rx="7.3" ry="7.4" fill="#e31c2c"/>
  <ellipse cx="210.2" cy="539.6" rx="2.6" ry="5.2" fill="#111b14"/>
  <!-- chrome -->
  <circle cx="242.4" cy="540" r="7.4" fill="#db4437"/>
  <path d="M242.4 540 L235.9 543.7 A7.4 7.4 0 0 0 246.1 546.4 Z" fill="#0f9d58"/>
  <path d="M242.4 540 L246.1 546.4 A7.4 7.4 0 0 0 249.8 540 L242.4 540 Z M242.4 540 L249.8 540 A7.4 7.4 0 0 0 248.9 536.4 Z" fill="#f4c20d"/>
  <path d="M242.4 540 L235.9 543.7 A7.4 7.4 0 0 1 235.1 538.5 Z" fill="#0f9d58"/>
  <circle cx="242.4" cy="540" r="3.3" fill="#fff"/>
  <circle cx="242.4" cy="540" r="2.5" fill="#4285f4"/>
  <rect x="229.4" y="551.8" width="26.3" height="1.4" fill="#77b8ec"/>
  <!-- powerpoint highlight -->
  <rect x="258.6" y="527" width="31.8" height="26" fill="#465246"/>
  <rect x="267" y="532.5" width="14.5" height="14" rx="0.8" fill="#fce3d2" stroke="#e55a26" stroke-width="0.9"/>
  <text x="268.6" y="543.6" font-family="Liberation Sans" font-weight="bold" font-size="11" fill="#e5461a">P</text>
  <circle cx="277.6" cy="541.5" r="2.4" fill="#f07a45"/>
  <circle cx="278.3" cy="540.8" r="1" fill="#fde3d2"/>
  <rect x="258.6" y="551.8" width="31.8" height="1.4" fill="#77b8ec"/>
  <!-- word -->
  <rect x="299.5" y="532.5" width="13.5" height="13.5" rx="0.8" fill="#f6f9fe" stroke="#2a5fc0" stroke-width="0.9"/>
  <text x="299.6" y="543.3" font-family="Liberation Sans" font-weight="bold" font-size="10.5" fill="#1a4fb0">W</text>
  <rect x="294" y="551.8" width="26" height="1.4" fill="#77b8ec"/>
  <!-- tray -->
  <path d="M723.3 541.8 L727 538 L730.7 541.8" fill="none" stroke="#eee" stroke-width="1.2"/>
  <rect x="739.5" y="536.5" width="5.5" height="6" rx="1" fill="none" stroke="#ddd" stroke-width="1"/>
  <path d="M745 538.5 L747 537.5 V541.5 L745 540.5" fill="none" stroke="#ddd" stroke-width="0.9"/>
  <path d="M739 535 Q742 533.5 745.5 535 M739 544.5 Q742 546 745.5 544.5" fill="none" stroke="#ccc" stroke-width="0.8"/>
  <rect x="753" y="537" width="3" height="3" fill="#e6e6e6"/>
  <rect x="755.5" y="538" width="8" height="5" fill="#e6e6e6"/>
  <rect x="763.5" y="539.3" width="0.8" height="2.4" fill="#e6e6e6"/>
  <path d="M770.5 544 A8 8 0 0 1 778.5 536 M772.8 544 A5.7 5.7 0 0 1 778.5 538.3 M775 544 A3.5 3.5 0 0 1 778.5 540.5" fill="none" stroke="#d8d8d8" stroke-width="0.9"/>
  <path d="M784.5 538.5 H786.5 L789.5 535.5 V544.5 L786.5 541.5 H784.5 Z" fill="none" stroke="#e6e6e6" stroke-width="1"/>
  <path d="M791.3 538 Q792.5 540 791.3 542 M793.3 536.5 Q795.3 540 793.3 543.5" fill="none" stroke="#e6e6e6" stroke-width="0.9"/>
  <path d="M872.5 535.5 H884 V543.5 H879.5 L877 546 V543.5 H872.5 Z" fill="#f2f2f2"/>
  <path d="M874.5 538 H882 M874.5 540 H882 M874.5 542 H879" stroke="#9a9a9a" stroke-width="0.6"/>
</svg>
<!-- spell underline -->
<svg style="left:512px;top:397px" width="132" height="5" viewBox="0 0 132 5">
  <path d="M0 2 Q1.5 0.5 3 2 T6 2 T9 2 T12 2 T15 2 T18 2 T21 2 T24 2 T27 2 T30 2 T33 2 T36 2 T39 2 T42 2 T45 2 T48 2 T51 2 T54 2 T57 2 T60 2 T63 2 T66 2 T69 2 T72 2 T75 2 T78 2 T81 2 T84 2 T87 2 T90 2 T93 2 T96 2 T99 2 T102 2 T105 2 T108 2 T111 2 T114 2 T117 2 T120 2 T123 2 T126 2 T129 2 T132 2" fill="none" stroke="#e04848" stroke-width="0.7"/>
</svg>

<span class="tx" style="left:310.80px;top:52.43px;font-size:7.40px;color:#2b2b2b;transform:scaleX(1.0613);">Презентація, конференція_2 [Режим совместимости]&nbsp; -&nbsp; Microsoft PowerPoint</span>
<span class="tx" style="left:9.30px;top:68.42px;font-size:7.30px;color:#ffffff;transform:scaleX(0.9113);font-weight:bold">Файл</span>
<span class="tx" style="left:48.00px;top:68.42px;font-size:7.30px;color:#383838;transform:scaleX(0.9899);">Главная</span>
<span class="tx" style="left:94.40px;top:68.42px;font-size:7.30px;color:#383838;transform:scaleX(0.9438);">Вставка</span>
<span class="tx" style="left:139.00px;top:68.42px;font-size:7.30px;color:#383838;transform:scaleX(1.0803);">Дизайн</span>
<span class="tx" style="left:184.00px;top:68.42px;font-size:7.30px;color:#383838;transform:scaleX(1.0019);">Переходы</span>
<span class="tx" style="left:237.30px;top:68.42px;font-size:7.30px;color:#383838;transform:scaleX(1.0506);">Анимация</span>
<span class="tx" style="left:291.70px;top:68.42px;font-size:7.30px;color:#383838;transform:scaleX(1.0269);">Показ слайдов</span>
<span class="tx" style="left:361.70px;top:68.42px;font-size:7.30px;color:#383838;transform:scaleX(1.0469);">Рецензирование</span>
<span class="tx" style="left:439.30px;top:68.42px;font-size:7.30px;color:#383838;transform:scaleX(0.9392);">Вид</span>
<span class="tx" style="left:13.80px;top:107.12px;font-size:7.30px;color:#363636;transform:scaleX(0.8331);">С</span>
<span class="tx" style="left:4.00px;top:115.62px;font-size:7.30px;color:#363636;transform:scaleX(1.0328);">начала</span>
<span class="tx" style="left:32.90px;top:107.12px;font-size:7.30px;color:#363636;transform:scaleX(1.0032);">С текущего</span>
<span class="tx" style="left:39.60px;top:115.62px;font-size:7.30px;color:#363636;transform:scaleX(0.9647);">слайда</span>
<span class="tx" style="left:80.40px;top:107.12px;font-size:7.30px;color:#363636;transform:scaleX(1.0572);">Широковещательный</span>
<span class="tx" style="left:93.70px;top:115.62px;font-size:7.30px;color:#363636;transform:scaleX(1.0316);">показ слайдов</span>
<span class="tx" style="left:160.80px;top:107.12px;font-size:7.30px;color:#363636;transform:scaleX(1.0543);">Произвольный</span>
<span class="tx" style="left:174.50px;top:115.62px;font-size:7.30px;color:#363636;transform:scaleX(1.1505);">показ</span>
<span class="tx" style="left:230.00px;top:107.12px;font-size:7.30px;color:#363636;transform:scaleX(1.0384);">Настройка</span>
<span class="tx" style="left:223.30px;top:115.62px;font-size:7.30px;color:#363636;transform:scaleX(1.0459);">демонстрации</span>
<span class="tx" style="left:278.40px;top:107.12px;font-size:7.30px;color:#363636;transform:scaleX(1.0192);">Скрыть</span>
<span class="tx" style="left:281.00px;top:115.62px;font-size:7.30px;color:#363636;transform:scaleX(0.9846);">слайд</span>
<span class="tx" style="left:313.00px;top:107.12px;font-size:7.30px;color:#363636;transform:scaleX(1.0300);">Настройка</span>
<span class="tx" style="left:316.70px;top:115.62px;font-size:7.30px;color:#363636;transform:scaleX(1.0278);">времени</span>
<span class="tx" style="left:354.00px;top:107.12px;font-size:7.30px;color:#363636;transform:scaleX(1.0345);">Запись показа</span>
<span class="tx" style="left:363.00px;top:115.62px;font-size:7.30px;color:#363636;transform:scaleX(1.0448);">слайдов</span>
<span class="tx" style="left:71.10px;top:126.92px;font-size:7.30px;color:#5f6074;transform:scaleX(1.0255);">Начать показ слайдов</span>
<span class="tx" style="left:392.00px;top:126.92px;font-size:7.30px;color:#5f6074;transform:scaleX(1.0300);">Настройка</span>
<span class="tx" style="left:665.00px;top:126.92px;font-size:7.30px;color:#5f6074;transform:scaleX(1.0872);">Мониторы</span>
<span class="tx" style="left:421.30px;top:84.62px;font-size:7.30px;color:#363636;transform:scaleX(1.0555);">Воспроизвести речевое сопровождение</span>
<span class="tx" style="left:421.30px;top:99.12px;font-size:7.30px;color:#363636;transform:scaleX(1.0241);">Использовать время показа слайдов</span>
<span class="tx" style="left:421.30px;top:113.42px;font-size:7.30px;color:#363636;transform:scaleX(1.0367);">Показать элементы управления проигрывателем</span>
<span class="tx" style="left:619.40px;top:84.72px;font-size:7.30px;color:#363636;transform:scaleX(1.0097);">Разрешение:</span>
<span class="tx" style="left:669.40px;top:84.72px;font-size:7.30px;color:#363636;transform:scaleX(1.0164);">Использовать текуще...</span>
<span class="tx" style="left:619.40px;top:99.32px;font-size:7.30px;color:#a9a9a9;transform:scaleX(1.0331);">Показать на:</span>
<span class="tx" style="left:619.00px;top:114.02px;font-size:7.30px;color:#363636;transform:scaleX(1.0471);">Режим докладчика</span>
<span class="tx" style="left:11.70px;top:140.01px;font-size:9.20px;color:#4a4a4a;transform:scaleX(0.8274);">Слайды</span>
<span class="tx" style="left:61.00px;top:140.01px;font-size:9.20px;color:#555555;transform:scaleX(0.8396);">Структура</span>
<span class="tx" style="left:5.60px;top:515.32px;font-size:8.60px;color:#454545;transform:scaleX(0.8218);">Слайд 24 из 32</span>
<span class="tx" style="left:68.50px;top:515.32px;font-size:8.60px;color:#454545;transform:scaleX(0.8645);">"Капсулы"</span>
<span class="tx" style="left:114.80px;top:515.32px;font-size:8.60px;color:#454545;transform:scaleX(0.9046);">русский</span>
<span class="tx" style="left:775.00px;top:515.32px;font-size:8.60px;color:#454545;transform:scaleX(0.7964);">74%</span>
<span class="tx" style="left:149.50px;top:485.73px;font-size:10.00px;color:#1e1e1e;transform:scaleX(1.0556);">Заметки к слайду</span>
<span class="tx" style="left:802.40px;top:536.17px;font-size:8.30px;color:#ffffff;transform:scaleX(0.8759);">УКР</span>
<span class="tx" style="left:834.00px;top:530.07px;font-size:8.30px;color:#ffffff;transform:scaleX(0.8861);">15:33</span>
<span class="tx" style="left:826.00px;top:541.77px;font-size:8.30px;color:#ffffff;transform:scaleX(0.8548);">18.02.2022</span>
<span class="tx" style="left:468.50px;top:182.99px;font-size:23.40px;color:#b3101a;transform:scaleX(1.0067);font-weight:bold;-webkit-text-stroke:0.2px #b3101a">Доповідь</span>
<span class="tx" style="left:330.50px;top:433.79px;font-size:18.20px;color:#dc1219;transform:scaleX(1.0105);font-style:italic;-webkit-text-stroke:0.25px #dc1219">Технології ознайомлення молодших школярів</span>
<span class="tx" style="left:356.00px;top:454.09px;font-size:18.20px;color:#dc1219;transform:scaleX(1.0083);font-style:italic;-webkit-text-stroke:0.25px #dc1219">із біографією українських письменників</span>
</body></html>
